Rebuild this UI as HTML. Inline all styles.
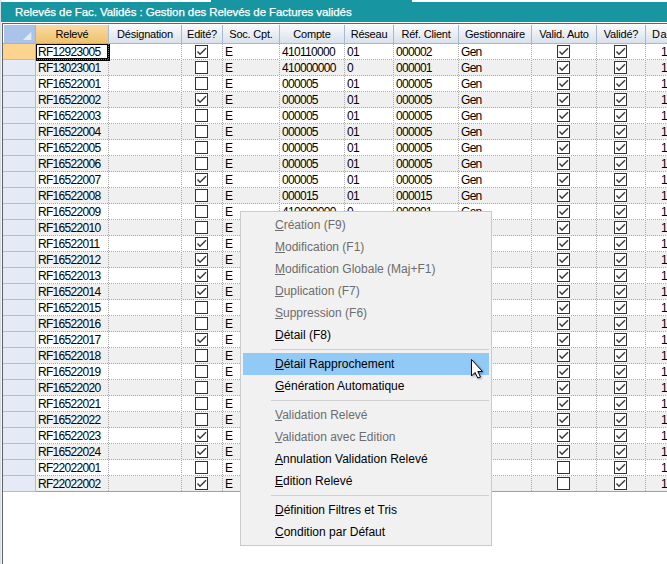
<!DOCTYPE html>
<html><head><meta charset="utf-8">
<style>
*{margin:0;padding:0;box-sizing:border-box}
html,body{width:667px;height:564px;overflow:hidden;background:#fff}
body{position:relative;font-family:"Liberation Sans",sans-serif}
.a{position:absolute}
.t{position:absolute;font-size:12px;letter-spacing:-0.7px;color:#000;white-space:nowrap;line-height:16px}
.h{position:absolute;font-size:11px;letter-spacing:-0.2px;color:#000;white-space:nowrap;line-height:18px;top:25px;text-align:center}
.cb{position:absolute;width:13px;height:13px;border:1px solid #333;background:#fff}
.cb svg{position:absolute;left:-1px;top:-1px}
.mi{position:absolute;left:275px;font-size:12px;white-space:nowrap;line-height:22px;color:#000}
.mi.d{color:#6d6d6d}
.mi u{text-decoration:underline;text-decoration-thickness:1px;text-underline-offset:1px}
</style></head><body>

<div class="a" style="left:0;top:0;width:1px;height:564px;background:#d6dfe8"></div><div class="a" style="left:1px;top:0;width:1px;height:564px;background:#eef2f6"></div>
<div class="a" style="left:211px;top:0;width:201px;height:2px;background:#1795a1"></div>
<div class="a" style="left:1px;top:2px;width:666px;height:20px;background:#1795a1"></div>
<div class="a" style="left:15px;top:2px;height:20px;line-height:20px;font-size:11.5px;letter-spacing:-0.08px;color:#fff;white-space:nowrap;-webkit-text-stroke:0.25px #fff">Relevés de Fac. Validés : Gestion des Relevés de Factures validés</div>
<div class="a" style="left:2px;top:23px;width:665px;height:541px;border-left:1px solid #646464;border-top:1px solid #646464"></div>
<div class="a" style="left:3px;top:24px;width:664px;height:540px;border-left:1px solid #fff;border-top:1px solid #fff"></div>
<div class="a" style="left:4px;top:25px;width:663px;height:18px;background:linear-gradient(#f9fafc,#dae1eb)"></div>
<div class="a" style="left:4px;top:43px;width:663px;height:1px;background:#a5b9d3"></div>
<div class="a" style="left:4px;top:25px;width:31px;height:18px;background:#a9c4e8"></div>
<svg class="a" style="left:0;top:0" width="40" height="44"><polygon points="23,40 31.3,31.7 31.3,40" fill="#e4ebf6"/></svg>
<div class="a" style="left:36px;top:25px;width:72px;height:18px;background:linear-gradient(#f9dba6,#efc16b)"></div>
<div class="a" style="left:35px;top:25px;width:1px;height:19px;background:#f7a43e"></div>
<div class="a" style="left:3px;top:43px;width:105px;height:1px;background:#f7a43e"></div>
<div class="a" style="left:108px;top:25px;width:1px;height:18px;background:#a5b9d3"></div>
<div class="a" style="left:181px;top:25px;width:1px;height:18px;background:#a5b9d3"></div>
<div class="a" style="left:222px;top:25px;width:1px;height:18px;background:#a5b9d3"></div>
<div class="a" style="left:279px;top:25px;width:1px;height:18px;background:#a5b9d3"></div>
<div class="a" style="left:344px;top:25px;width:1px;height:18px;background:#a5b9d3"></div>
<div class="a" style="left:393px;top:25px;width:1px;height:18px;background:#a5b9d3"></div>
<div class="a" style="left:458px;top:25px;width:1px;height:18px;background:#a5b9d3"></div>
<div class="a" style="left:531px;top:25px;width:1px;height:18px;background:#a5b9d3"></div>
<div class="a" style="left:596px;top:25px;width:1px;height:18px;background:#a5b9d3"></div>
<div class="a" style="left:645px;top:25px;width:1px;height:18px;background:#a5b9d3"></div>
<div class="h" style="left:36px;width:72px">Relevé</div>
<div class="h" style="left:109px;width:72px">Désignation</div>
<div class="h" style="left:182px;width:40px">Edité?</div>
<div class="h" style="left:223px;width:56px">Soc. Cpt.</div>
<div class="h" style="left:280px;width:64px">Compte</div>
<div class="h" style="left:345px;width:48px">Réseau</div>
<div class="h" style="left:394px;width:64px">Réf. Client</div>
<div class="h" style="left:459px;width:72px">Gestionnaire</div>
<div class="h" style="left:532px;width:64px">Valid. Auto</div>
<div class="h" style="left:597px;width:48px">Validé?</div>
<div class="h" style="left:652px;width:40px;text-align:left;letter-spacing:0.6px">Da</div>
<div class="a" style="left:36px;top:44px;width:631px;height:15px;background:#fff"></div>
<div class="a" style="left:3px;top:44px;width:32px;height:15px;background:#fdd48f"></div>
<div class="a" style="left:3px;top:59px;width:33px;height:1px;background:#a8bedb"></div>
<div class="a" style="left:35px;top:44px;width:1px;height:16px;background:#f7a43e"></div>
<div class="a" style="left:36px;top:59px;width:631px;height:1px;background:repeating-linear-gradient(90deg,#fff 0 1px,#a8a8a8 1px 2px)"></div>
<div class="t" style="left:38px;top:44px">RF12923005</div>
<div class="t" style="left:225px;top:44px">E</div>
<div class="t" style="left:282px;top:44px">410110000</div>
<div class="t" style="left:347px;top:44px">01</div>
<div class="t" style="left:396px;top:44px">000002</div>
<div class="t" style="left:461px;top:44px">Gen</div>
<div class="t" style="left:661px;top:44px">1</div>
<div class="cb" style="left:195px;top:45px"><svg width="13" height="13"><polyline points="2.5,6.5 5,9.2 11,3.2" fill="none" stroke="#3a3a3a" stroke-width="1.5"/></svg></div>
<div class="cb" style="left:557px;top:45px"><svg width="13" height="13"><polyline points="2.5,6.5 5,9.2 11,3.2" fill="none" stroke="#3a3a3a" stroke-width="1.5"/></svg></div>
<div class="cb" style="left:614px;top:45px"><svg width="13" height="13"><polyline points="2.5,6.5 5,9.2 11,3.2" fill="none" stroke="#3a3a3a" stroke-width="1.5"/></svg></div>
<div class="a" style="left:36px;top:60px;width:631px;height:15px;background:#f0f0f0"></div>
<div class="a" style="left:3px;top:60px;width:32px;height:15px;background:#e4ebf7"></div>
<div class="a" style="left:3px;top:75px;width:33px;height:1px;background:#a8bedb"></div>
<div class="a" style="left:35px;top:60px;width:1px;height:16px;background:#a8bedb"></div>
<div class="a" style="left:36px;top:75px;width:631px;height:1px;background:repeating-linear-gradient(90deg,#f0f0f0 0 1px,#a8a8a8 1px 2px)"></div>
<div class="t" style="left:38px;top:60px">RF13023001</div>
<div class="t" style="left:225px;top:60px">E</div>
<div class="t" style="left:282px;top:60px">410000000</div>
<div class="t" style="left:347px;top:60px">0</div>
<div class="t" style="left:396px;top:60px">000001</div>
<div class="t" style="left:461px;top:60px">Gen</div>
<div class="t" style="left:661px;top:60px">1</div>
<div class="cb" style="left:195px;top:61px"></div>
<div class="cb" style="left:557px;top:61px"><svg width="13" height="13"><polyline points="2.5,6.5 5,9.2 11,3.2" fill="none" stroke="#3a3a3a" stroke-width="1.5"/></svg></div>
<div class="cb" style="left:614px;top:61px"><svg width="13" height="13"><polyline points="2.5,6.5 5,9.2 11,3.2" fill="none" stroke="#3a3a3a" stroke-width="1.5"/></svg></div>
<div class="a" style="left:36px;top:76px;width:631px;height:15px;background:#fff"></div>
<div class="a" style="left:3px;top:76px;width:32px;height:15px;background:#e4ebf7"></div>
<div class="a" style="left:3px;top:91px;width:33px;height:1px;background:#a8bedb"></div>
<div class="a" style="left:35px;top:76px;width:1px;height:16px;background:#a8bedb"></div>
<div class="a" style="left:36px;top:91px;width:631px;height:1px;background:repeating-linear-gradient(90deg,#fff 0 1px,#a8a8a8 1px 2px)"></div>
<div class="t" style="left:38px;top:76px">RF16522001</div>
<div class="t" style="left:225px;top:76px">E</div>
<div class="t" style="left:282px;top:76px">000005</div>
<div class="t" style="left:347px;top:76px">01</div>
<div class="t" style="left:396px;top:76px">000005</div>
<div class="t" style="left:461px;top:76px">Gen</div>
<div class="t" style="left:661px;top:76px">1</div>
<div class="cb" style="left:195px;top:77px"></div>
<div class="cb" style="left:557px;top:77px"><svg width="13" height="13"><polyline points="2.5,6.5 5,9.2 11,3.2" fill="none" stroke="#3a3a3a" stroke-width="1.5"/></svg></div>
<div class="cb" style="left:614px;top:77px"><svg width="13" height="13"><polyline points="2.5,6.5 5,9.2 11,3.2" fill="none" stroke="#3a3a3a" stroke-width="1.5"/></svg></div>
<div class="a" style="left:36px;top:92px;width:631px;height:15px;background:#f0f0f0"></div>
<div class="a" style="left:3px;top:92px;width:32px;height:15px;background:#e4ebf7"></div>
<div class="a" style="left:3px;top:107px;width:33px;height:1px;background:#a8bedb"></div>
<div class="a" style="left:35px;top:92px;width:1px;height:16px;background:#a8bedb"></div>
<div class="a" style="left:36px;top:107px;width:631px;height:1px;background:repeating-linear-gradient(90deg,#f0f0f0 0 1px,#a8a8a8 1px 2px)"></div>
<div class="t" style="left:38px;top:92px">RF16522002</div>
<div class="t" style="left:225px;top:92px">E</div>
<div class="t" style="left:282px;top:92px">000005</div>
<div class="t" style="left:347px;top:92px">01</div>
<div class="t" style="left:396px;top:92px">000005</div>
<div class="t" style="left:461px;top:92px">Gen</div>
<div class="t" style="left:661px;top:92px">1</div>
<div class="cb" style="left:195px;top:93px"><svg width="13" height="13"><polyline points="2.5,6.5 5,9.2 11,3.2" fill="none" stroke="#3a3a3a" stroke-width="1.5"/></svg></div>
<div class="cb" style="left:557px;top:93px"><svg width="13" height="13"><polyline points="2.5,6.5 5,9.2 11,3.2" fill="none" stroke="#3a3a3a" stroke-width="1.5"/></svg></div>
<div class="cb" style="left:614px;top:93px"><svg width="13" height="13"><polyline points="2.5,6.5 5,9.2 11,3.2" fill="none" stroke="#3a3a3a" stroke-width="1.5"/></svg></div>
<div class="a" style="left:36px;top:108px;width:631px;height:15px;background:#fff"></div>
<div class="a" style="left:3px;top:108px;width:32px;height:15px;background:#e4ebf7"></div>
<div class="a" style="left:3px;top:123px;width:33px;height:1px;background:#a8bedb"></div>
<div class="a" style="left:35px;top:108px;width:1px;height:16px;background:#a8bedb"></div>
<div class="a" style="left:36px;top:123px;width:631px;height:1px;background:repeating-linear-gradient(90deg,#fff 0 1px,#a8a8a8 1px 2px)"></div>
<div class="t" style="left:38px;top:108px">RF16522003</div>
<div class="t" style="left:225px;top:108px">E</div>
<div class="t" style="left:282px;top:108px">000005</div>
<div class="t" style="left:347px;top:108px">01</div>
<div class="t" style="left:396px;top:108px">000005</div>
<div class="t" style="left:461px;top:108px">Gen</div>
<div class="t" style="left:661px;top:108px">1</div>
<div class="cb" style="left:195px;top:109px"></div>
<div class="cb" style="left:557px;top:109px"><svg width="13" height="13"><polyline points="2.5,6.5 5,9.2 11,3.2" fill="none" stroke="#3a3a3a" stroke-width="1.5"/></svg></div>
<div class="cb" style="left:614px;top:109px"><svg width="13" height="13"><polyline points="2.5,6.5 5,9.2 11,3.2" fill="none" stroke="#3a3a3a" stroke-width="1.5"/></svg></div>
<div class="a" style="left:36px;top:124px;width:631px;height:15px;background:#f0f0f0"></div>
<div class="a" style="left:3px;top:124px;width:32px;height:15px;background:#e4ebf7"></div>
<div class="a" style="left:3px;top:139px;width:33px;height:1px;background:#a8bedb"></div>
<div class="a" style="left:35px;top:124px;width:1px;height:16px;background:#a8bedb"></div>
<div class="a" style="left:36px;top:139px;width:631px;height:1px;background:repeating-linear-gradient(90deg,#f0f0f0 0 1px,#a8a8a8 1px 2px)"></div>
<div class="t" style="left:38px;top:124px">RF16522004</div>
<div class="t" style="left:225px;top:124px">E</div>
<div class="t" style="left:282px;top:124px">000005</div>
<div class="t" style="left:347px;top:124px">01</div>
<div class="t" style="left:396px;top:124px">000005</div>
<div class="t" style="left:461px;top:124px">Gen</div>
<div class="t" style="left:661px;top:124px">1</div>
<div class="cb" style="left:195px;top:125px"></div>
<div class="cb" style="left:557px;top:125px"><svg width="13" height="13"><polyline points="2.5,6.5 5,9.2 11,3.2" fill="none" stroke="#3a3a3a" stroke-width="1.5"/></svg></div>
<div class="cb" style="left:614px;top:125px"><svg width="13" height="13"><polyline points="2.5,6.5 5,9.2 11,3.2" fill="none" stroke="#3a3a3a" stroke-width="1.5"/></svg></div>
<div class="a" style="left:36px;top:140px;width:631px;height:15px;background:#fff"></div>
<div class="a" style="left:3px;top:140px;width:32px;height:15px;background:#e4ebf7"></div>
<div class="a" style="left:3px;top:155px;width:33px;height:1px;background:#a8bedb"></div>
<div class="a" style="left:35px;top:140px;width:1px;height:16px;background:#a8bedb"></div>
<div class="a" style="left:36px;top:155px;width:631px;height:1px;background:repeating-linear-gradient(90deg,#fff 0 1px,#a8a8a8 1px 2px)"></div>
<div class="t" style="left:38px;top:140px">RF16522005</div>
<div class="t" style="left:225px;top:140px">E</div>
<div class="t" style="left:282px;top:140px">000005</div>
<div class="t" style="left:347px;top:140px">01</div>
<div class="t" style="left:396px;top:140px">000005</div>
<div class="t" style="left:461px;top:140px">Gen</div>
<div class="t" style="left:661px;top:140px">1</div>
<div class="cb" style="left:195px;top:141px"></div>
<div class="cb" style="left:557px;top:141px"><svg width="13" height="13"><polyline points="2.5,6.5 5,9.2 11,3.2" fill="none" stroke="#3a3a3a" stroke-width="1.5"/></svg></div>
<div class="cb" style="left:614px;top:141px"><svg width="13" height="13"><polyline points="2.5,6.5 5,9.2 11,3.2" fill="none" stroke="#3a3a3a" stroke-width="1.5"/></svg></div>
<div class="a" style="left:36px;top:156px;width:631px;height:15px;background:#f0f0f0"></div>
<div class="a" style="left:3px;top:156px;width:32px;height:15px;background:#e4ebf7"></div>
<div class="a" style="left:3px;top:171px;width:33px;height:1px;background:#a8bedb"></div>
<div class="a" style="left:35px;top:156px;width:1px;height:16px;background:#a8bedb"></div>
<div class="a" style="left:36px;top:171px;width:631px;height:1px;background:repeating-linear-gradient(90deg,#f0f0f0 0 1px,#a8a8a8 1px 2px)"></div>
<div class="t" style="left:38px;top:156px">RF16522006</div>
<div class="t" style="left:225px;top:156px">E</div>
<div class="t" style="left:282px;top:156px">000005</div>
<div class="t" style="left:347px;top:156px">01</div>
<div class="t" style="left:396px;top:156px">000005</div>
<div class="t" style="left:461px;top:156px">Gen</div>
<div class="t" style="left:661px;top:156px">1</div>
<div class="cb" style="left:195px;top:157px"></div>
<div class="cb" style="left:557px;top:157px"><svg width="13" height="13"><polyline points="2.5,6.5 5,9.2 11,3.2" fill="none" stroke="#3a3a3a" stroke-width="1.5"/></svg></div>
<div class="cb" style="left:614px;top:157px"><svg width="13" height="13"><polyline points="2.5,6.5 5,9.2 11,3.2" fill="none" stroke="#3a3a3a" stroke-width="1.5"/></svg></div>
<div class="a" style="left:36px;top:172px;width:631px;height:15px;background:#fff"></div>
<div class="a" style="left:3px;top:172px;width:32px;height:15px;background:#e4ebf7"></div>
<div class="a" style="left:3px;top:187px;width:33px;height:1px;background:#a8bedb"></div>
<div class="a" style="left:35px;top:172px;width:1px;height:16px;background:#a8bedb"></div>
<div class="a" style="left:36px;top:187px;width:631px;height:1px;background:repeating-linear-gradient(90deg,#fff 0 1px,#a8a8a8 1px 2px)"></div>
<div class="t" style="left:38px;top:172px">RF16522007</div>
<div class="t" style="left:225px;top:172px">E</div>
<div class="t" style="left:282px;top:172px">000005</div>
<div class="t" style="left:347px;top:172px">01</div>
<div class="t" style="left:396px;top:172px">000005</div>
<div class="t" style="left:461px;top:172px">Gen</div>
<div class="t" style="left:661px;top:172px">1</div>
<div class="cb" style="left:195px;top:173px"><svg width="13" height="13"><polyline points="2.5,6.5 5,9.2 11,3.2" fill="none" stroke="#3a3a3a" stroke-width="1.5"/></svg></div>
<div class="cb" style="left:557px;top:173px"><svg width="13" height="13"><polyline points="2.5,6.5 5,9.2 11,3.2" fill="none" stroke="#3a3a3a" stroke-width="1.5"/></svg></div>
<div class="cb" style="left:614px;top:173px"><svg width="13" height="13"><polyline points="2.5,6.5 5,9.2 11,3.2" fill="none" stroke="#3a3a3a" stroke-width="1.5"/></svg></div>
<div class="a" style="left:36px;top:188px;width:631px;height:15px;background:#f0f0f0"></div>
<div class="a" style="left:3px;top:188px;width:32px;height:15px;background:#e4ebf7"></div>
<div class="a" style="left:3px;top:203px;width:33px;height:1px;background:#a8bedb"></div>
<div class="a" style="left:35px;top:188px;width:1px;height:16px;background:#a8bedb"></div>
<div class="a" style="left:36px;top:203px;width:631px;height:1px;background:repeating-linear-gradient(90deg,#f0f0f0 0 1px,#a8a8a8 1px 2px)"></div>
<div class="t" style="left:38px;top:188px">RF16522008</div>
<div class="t" style="left:225px;top:188px">E</div>
<div class="t" style="left:282px;top:188px">000015</div>
<div class="t" style="left:347px;top:188px">01</div>
<div class="t" style="left:396px;top:188px">000015</div>
<div class="t" style="left:461px;top:188px">Gen</div>
<div class="t" style="left:661px;top:188px">1</div>
<div class="cb" style="left:195px;top:189px"></div>
<div class="cb" style="left:557px;top:189px"><svg width="13" height="13"><polyline points="2.5,6.5 5,9.2 11,3.2" fill="none" stroke="#3a3a3a" stroke-width="1.5"/></svg></div>
<div class="cb" style="left:614px;top:189px"><svg width="13" height="13"><polyline points="2.5,6.5 5,9.2 11,3.2" fill="none" stroke="#3a3a3a" stroke-width="1.5"/></svg></div>
<div class="a" style="left:36px;top:204px;width:631px;height:15px;background:#fff"></div>
<div class="a" style="left:3px;top:204px;width:32px;height:15px;background:#e4ebf7"></div>
<div class="a" style="left:3px;top:219px;width:33px;height:1px;background:#a8bedb"></div>
<div class="a" style="left:35px;top:204px;width:1px;height:16px;background:#a8bedb"></div>
<div class="a" style="left:36px;top:219px;width:631px;height:1px;background:repeating-linear-gradient(90deg,#fff 0 1px,#a8a8a8 1px 2px)"></div>
<div class="t" style="left:38px;top:204px">RF16522009</div>
<div class="t" style="left:225px;top:204px">E</div>
<div class="t" style="left:282px;top:204px">410000000</div>
<div class="t" style="left:347px;top:204px">0</div>
<div class="t" style="left:396px;top:204px">000001</div>
<div class="t" style="left:461px;top:204px">Gen</div>
<div class="t" style="left:661px;top:204px">1</div>
<div class="cb" style="left:195px;top:205px"></div>
<div class="cb" style="left:557px;top:205px"><svg width="13" height="13"><polyline points="2.5,6.5 5,9.2 11,3.2" fill="none" stroke="#3a3a3a" stroke-width="1.5"/></svg></div>
<div class="cb" style="left:614px;top:205px"><svg width="13" height="13"><polyline points="2.5,6.5 5,9.2 11,3.2" fill="none" stroke="#3a3a3a" stroke-width="1.5"/></svg></div>
<div class="a" style="left:36px;top:220px;width:631px;height:15px;background:#f0f0f0"></div>
<div class="a" style="left:3px;top:220px;width:32px;height:15px;background:#e4ebf7"></div>
<div class="a" style="left:3px;top:235px;width:33px;height:1px;background:#a8bedb"></div>
<div class="a" style="left:35px;top:220px;width:1px;height:16px;background:#a8bedb"></div>
<div class="a" style="left:36px;top:235px;width:631px;height:1px;background:repeating-linear-gradient(90deg,#f0f0f0 0 1px,#a8a8a8 1px 2px)"></div>
<div class="t" style="left:38px;top:220px">RF16522010</div>
<div class="t" style="left:225px;top:220px">E</div>
<div class="t" style="left:282px;top:220px">000005</div>
<div class="t" style="left:347px;top:220px">01</div>
<div class="t" style="left:396px;top:220px">000005</div>
<div class="t" style="left:461px;top:220px">Gen</div>
<div class="t" style="left:661px;top:220px">1</div>
<div class="cb" style="left:195px;top:221px"></div>
<div class="cb" style="left:557px;top:221px"><svg width="13" height="13"><polyline points="2.5,6.5 5,9.2 11,3.2" fill="none" stroke="#3a3a3a" stroke-width="1.5"/></svg></div>
<div class="cb" style="left:614px;top:221px"><svg width="13" height="13"><polyline points="2.5,6.5 5,9.2 11,3.2" fill="none" stroke="#3a3a3a" stroke-width="1.5"/></svg></div>
<div class="a" style="left:36px;top:236px;width:631px;height:15px;background:#fff"></div>
<div class="a" style="left:3px;top:236px;width:32px;height:15px;background:#e4ebf7"></div>
<div class="a" style="left:3px;top:251px;width:33px;height:1px;background:#a8bedb"></div>
<div class="a" style="left:35px;top:236px;width:1px;height:16px;background:#a8bedb"></div>
<div class="a" style="left:36px;top:251px;width:631px;height:1px;background:repeating-linear-gradient(90deg,#fff 0 1px,#a8a8a8 1px 2px)"></div>
<div class="t" style="left:38px;top:236px">RF16522011</div>
<div class="t" style="left:225px;top:236px">E</div>
<div class="t" style="left:282px;top:236px">000005</div>
<div class="t" style="left:347px;top:236px">01</div>
<div class="t" style="left:396px;top:236px">000005</div>
<div class="t" style="left:461px;top:236px">Gen</div>
<div class="t" style="left:661px;top:236px">1</div>
<div class="cb" style="left:195px;top:237px"><svg width="13" height="13"><polyline points="2.5,6.5 5,9.2 11,3.2" fill="none" stroke="#3a3a3a" stroke-width="1.5"/></svg></div>
<div class="cb" style="left:557px;top:237px"><svg width="13" height="13"><polyline points="2.5,6.5 5,9.2 11,3.2" fill="none" stroke="#3a3a3a" stroke-width="1.5"/></svg></div>
<div class="cb" style="left:614px;top:237px"><svg width="13" height="13"><polyline points="2.5,6.5 5,9.2 11,3.2" fill="none" stroke="#3a3a3a" stroke-width="1.5"/></svg></div>
<div class="a" style="left:36px;top:252px;width:631px;height:15px;background:#f0f0f0"></div>
<div class="a" style="left:3px;top:252px;width:32px;height:15px;background:#e4ebf7"></div>
<div class="a" style="left:3px;top:267px;width:33px;height:1px;background:#a8bedb"></div>
<div class="a" style="left:35px;top:252px;width:1px;height:16px;background:#a8bedb"></div>
<div class="a" style="left:36px;top:267px;width:631px;height:1px;background:repeating-linear-gradient(90deg,#f0f0f0 0 1px,#a8a8a8 1px 2px)"></div>
<div class="t" style="left:38px;top:252px">RF16522012</div>
<div class="t" style="left:225px;top:252px">E</div>
<div class="t" style="left:282px;top:252px">000005</div>
<div class="t" style="left:347px;top:252px">01</div>
<div class="t" style="left:396px;top:252px">000005</div>
<div class="t" style="left:461px;top:252px">Gen</div>
<div class="t" style="left:661px;top:252px">1</div>
<div class="cb" style="left:195px;top:253px"><svg width="13" height="13"><polyline points="2.5,6.5 5,9.2 11,3.2" fill="none" stroke="#3a3a3a" stroke-width="1.5"/></svg></div>
<div class="cb" style="left:557px;top:253px"><svg width="13" height="13"><polyline points="2.5,6.5 5,9.2 11,3.2" fill="none" stroke="#3a3a3a" stroke-width="1.5"/></svg></div>
<div class="cb" style="left:614px;top:253px"><svg width="13" height="13"><polyline points="2.5,6.5 5,9.2 11,3.2" fill="none" stroke="#3a3a3a" stroke-width="1.5"/></svg></div>
<div class="a" style="left:36px;top:268px;width:631px;height:15px;background:#fff"></div>
<div class="a" style="left:3px;top:268px;width:32px;height:15px;background:#e4ebf7"></div>
<div class="a" style="left:3px;top:283px;width:33px;height:1px;background:#a8bedb"></div>
<div class="a" style="left:35px;top:268px;width:1px;height:16px;background:#a8bedb"></div>
<div class="a" style="left:36px;top:283px;width:631px;height:1px;background:repeating-linear-gradient(90deg,#fff 0 1px,#a8a8a8 1px 2px)"></div>
<div class="t" style="left:38px;top:268px">RF16522013</div>
<div class="t" style="left:225px;top:268px">E</div>
<div class="t" style="left:282px;top:268px">000005</div>
<div class="t" style="left:347px;top:268px">01</div>
<div class="t" style="left:396px;top:268px">000005</div>
<div class="t" style="left:461px;top:268px">Gen</div>
<div class="t" style="left:661px;top:268px">1</div>
<div class="cb" style="left:195px;top:269px"><svg width="13" height="13"><polyline points="2.5,6.5 5,9.2 11,3.2" fill="none" stroke="#3a3a3a" stroke-width="1.5"/></svg></div>
<div class="cb" style="left:557px;top:269px"><svg width="13" height="13"><polyline points="2.5,6.5 5,9.2 11,3.2" fill="none" stroke="#3a3a3a" stroke-width="1.5"/></svg></div>
<div class="cb" style="left:614px;top:269px"><svg width="13" height="13"><polyline points="2.5,6.5 5,9.2 11,3.2" fill="none" stroke="#3a3a3a" stroke-width="1.5"/></svg></div>
<div class="a" style="left:36px;top:284px;width:631px;height:15px;background:#f0f0f0"></div>
<div class="a" style="left:3px;top:284px;width:32px;height:15px;background:#e4ebf7"></div>
<div class="a" style="left:3px;top:299px;width:33px;height:1px;background:#a8bedb"></div>
<div class="a" style="left:35px;top:284px;width:1px;height:16px;background:#a8bedb"></div>
<div class="a" style="left:36px;top:299px;width:631px;height:1px;background:repeating-linear-gradient(90deg,#f0f0f0 0 1px,#a8a8a8 1px 2px)"></div>
<div class="t" style="left:38px;top:284px">RF16522014</div>
<div class="t" style="left:225px;top:284px">E</div>
<div class="t" style="left:282px;top:284px">000005</div>
<div class="t" style="left:347px;top:284px">01</div>
<div class="t" style="left:396px;top:284px">000005</div>
<div class="t" style="left:461px;top:284px">Gen</div>
<div class="t" style="left:661px;top:284px">1</div>
<div class="cb" style="left:195px;top:285px"><svg width="13" height="13"><polyline points="2.5,6.5 5,9.2 11,3.2" fill="none" stroke="#3a3a3a" stroke-width="1.5"/></svg></div>
<div class="cb" style="left:557px;top:285px"><svg width="13" height="13"><polyline points="2.5,6.5 5,9.2 11,3.2" fill="none" stroke="#3a3a3a" stroke-width="1.5"/></svg></div>
<div class="cb" style="left:614px;top:285px"><svg width="13" height="13"><polyline points="2.5,6.5 5,9.2 11,3.2" fill="none" stroke="#3a3a3a" stroke-width="1.5"/></svg></div>
<div class="a" style="left:36px;top:300px;width:631px;height:15px;background:#fff"></div>
<div class="a" style="left:3px;top:300px;width:32px;height:15px;background:#e4ebf7"></div>
<div class="a" style="left:3px;top:315px;width:33px;height:1px;background:#a8bedb"></div>
<div class="a" style="left:35px;top:300px;width:1px;height:16px;background:#a8bedb"></div>
<div class="a" style="left:36px;top:315px;width:631px;height:1px;background:repeating-linear-gradient(90deg,#fff 0 1px,#a8a8a8 1px 2px)"></div>
<div class="t" style="left:38px;top:300px">RF16522015</div>
<div class="t" style="left:225px;top:300px">E</div>
<div class="t" style="left:282px;top:300px">000005</div>
<div class="t" style="left:347px;top:300px">01</div>
<div class="t" style="left:396px;top:300px">000005</div>
<div class="t" style="left:461px;top:300px">Gen</div>
<div class="t" style="left:661px;top:300px">1</div>
<div class="cb" style="left:195px;top:301px"></div>
<div class="cb" style="left:557px;top:301px"><svg width="13" height="13"><polyline points="2.5,6.5 5,9.2 11,3.2" fill="none" stroke="#3a3a3a" stroke-width="1.5"/></svg></div>
<div class="cb" style="left:614px;top:301px"><svg width="13" height="13"><polyline points="2.5,6.5 5,9.2 11,3.2" fill="none" stroke="#3a3a3a" stroke-width="1.5"/></svg></div>
<div class="a" style="left:36px;top:316px;width:631px;height:15px;background:#f0f0f0"></div>
<div class="a" style="left:3px;top:316px;width:32px;height:15px;background:#e4ebf7"></div>
<div class="a" style="left:3px;top:331px;width:33px;height:1px;background:#a8bedb"></div>
<div class="a" style="left:35px;top:316px;width:1px;height:16px;background:#a8bedb"></div>
<div class="a" style="left:36px;top:331px;width:631px;height:1px;background:repeating-linear-gradient(90deg,#f0f0f0 0 1px,#a8a8a8 1px 2px)"></div>
<div class="t" style="left:38px;top:316px">RF16522016</div>
<div class="t" style="left:225px;top:316px">E</div>
<div class="t" style="left:282px;top:316px">000005</div>
<div class="t" style="left:347px;top:316px">01</div>
<div class="t" style="left:396px;top:316px">000005</div>
<div class="t" style="left:461px;top:316px">Gen</div>
<div class="t" style="left:661px;top:316px">1</div>
<div class="cb" style="left:195px;top:317px"></div>
<div class="cb" style="left:557px;top:317px"><svg width="13" height="13"><polyline points="2.5,6.5 5,9.2 11,3.2" fill="none" stroke="#3a3a3a" stroke-width="1.5"/></svg></div>
<div class="cb" style="left:614px;top:317px"><svg width="13" height="13"><polyline points="2.5,6.5 5,9.2 11,3.2" fill="none" stroke="#3a3a3a" stroke-width="1.5"/></svg></div>
<div class="a" style="left:36px;top:332px;width:631px;height:15px;background:#fff"></div>
<div class="a" style="left:3px;top:332px;width:32px;height:15px;background:#e4ebf7"></div>
<div class="a" style="left:3px;top:347px;width:33px;height:1px;background:#a8bedb"></div>
<div class="a" style="left:35px;top:332px;width:1px;height:16px;background:#a8bedb"></div>
<div class="a" style="left:36px;top:347px;width:631px;height:1px;background:repeating-linear-gradient(90deg,#fff 0 1px,#a8a8a8 1px 2px)"></div>
<div class="t" style="left:38px;top:332px">RF16522017</div>
<div class="t" style="left:225px;top:332px">E</div>
<div class="t" style="left:282px;top:332px">000005</div>
<div class="t" style="left:347px;top:332px">01</div>
<div class="t" style="left:396px;top:332px">000005</div>
<div class="t" style="left:461px;top:332px">Gen</div>
<div class="t" style="left:661px;top:332px">1</div>
<div class="cb" style="left:195px;top:333px"><svg width="13" height="13"><polyline points="2.5,6.5 5,9.2 11,3.2" fill="none" stroke="#3a3a3a" stroke-width="1.5"/></svg></div>
<div class="cb" style="left:557px;top:333px"><svg width="13" height="13"><polyline points="2.5,6.5 5,9.2 11,3.2" fill="none" stroke="#3a3a3a" stroke-width="1.5"/></svg></div>
<div class="cb" style="left:614px;top:333px"><svg width="13" height="13"><polyline points="2.5,6.5 5,9.2 11,3.2" fill="none" stroke="#3a3a3a" stroke-width="1.5"/></svg></div>
<div class="a" style="left:36px;top:348px;width:631px;height:15px;background:#f0f0f0"></div>
<div class="a" style="left:3px;top:348px;width:32px;height:15px;background:#e4ebf7"></div>
<div class="a" style="left:3px;top:363px;width:33px;height:1px;background:#a8bedb"></div>
<div class="a" style="left:35px;top:348px;width:1px;height:16px;background:#a8bedb"></div>
<div class="a" style="left:36px;top:363px;width:631px;height:1px;background:repeating-linear-gradient(90deg,#f0f0f0 0 1px,#a8a8a8 1px 2px)"></div>
<div class="t" style="left:38px;top:348px">RF16522018</div>
<div class="t" style="left:225px;top:348px">E</div>
<div class="t" style="left:282px;top:348px">000005</div>
<div class="t" style="left:347px;top:348px">01</div>
<div class="t" style="left:396px;top:348px">000005</div>
<div class="t" style="left:461px;top:348px">Gen</div>
<div class="t" style="left:661px;top:348px">1</div>
<div class="cb" style="left:195px;top:349px"></div>
<div class="cb" style="left:557px;top:349px"><svg width="13" height="13"><polyline points="2.5,6.5 5,9.2 11,3.2" fill="none" stroke="#3a3a3a" stroke-width="1.5"/></svg></div>
<div class="cb" style="left:614px;top:349px"><svg width="13" height="13"><polyline points="2.5,6.5 5,9.2 11,3.2" fill="none" stroke="#3a3a3a" stroke-width="1.5"/></svg></div>
<div class="a" style="left:36px;top:364px;width:631px;height:15px;background:#fff"></div>
<div class="a" style="left:3px;top:364px;width:32px;height:15px;background:#e4ebf7"></div>
<div class="a" style="left:3px;top:379px;width:33px;height:1px;background:#a8bedb"></div>
<div class="a" style="left:35px;top:364px;width:1px;height:16px;background:#a8bedb"></div>
<div class="a" style="left:36px;top:379px;width:631px;height:1px;background:repeating-linear-gradient(90deg,#fff 0 1px,#a8a8a8 1px 2px)"></div>
<div class="t" style="left:38px;top:364px">RF16522019</div>
<div class="t" style="left:225px;top:364px">E</div>
<div class="t" style="left:282px;top:364px">000005</div>
<div class="t" style="left:347px;top:364px">01</div>
<div class="t" style="left:396px;top:364px">000005</div>
<div class="t" style="left:461px;top:364px">Gen</div>
<div class="t" style="left:661px;top:364px">1</div>
<div class="cb" style="left:195px;top:365px"></div>
<div class="cb" style="left:557px;top:365px"><svg width="13" height="13"><polyline points="2.5,6.5 5,9.2 11,3.2" fill="none" stroke="#3a3a3a" stroke-width="1.5"/></svg></div>
<div class="cb" style="left:614px;top:365px"><svg width="13" height="13"><polyline points="2.5,6.5 5,9.2 11,3.2" fill="none" stroke="#3a3a3a" stroke-width="1.5"/></svg></div>
<div class="a" style="left:36px;top:380px;width:631px;height:15px;background:#f0f0f0"></div>
<div class="a" style="left:3px;top:380px;width:32px;height:15px;background:#e4ebf7"></div>
<div class="a" style="left:3px;top:395px;width:33px;height:1px;background:#a8bedb"></div>
<div class="a" style="left:35px;top:380px;width:1px;height:16px;background:#a8bedb"></div>
<div class="a" style="left:36px;top:395px;width:631px;height:1px;background:repeating-linear-gradient(90deg,#f0f0f0 0 1px,#a8a8a8 1px 2px)"></div>
<div class="t" style="left:38px;top:380px">RF16522020</div>
<div class="t" style="left:225px;top:380px">E</div>
<div class="t" style="left:282px;top:380px">000005</div>
<div class="t" style="left:347px;top:380px">01</div>
<div class="t" style="left:396px;top:380px">000005</div>
<div class="t" style="left:461px;top:380px">Gen</div>
<div class="t" style="left:661px;top:380px">1</div>
<div class="cb" style="left:195px;top:381px"></div>
<div class="cb" style="left:557px;top:381px"><svg width="13" height="13"><polyline points="2.5,6.5 5,9.2 11,3.2" fill="none" stroke="#3a3a3a" stroke-width="1.5"/></svg></div>
<div class="cb" style="left:614px;top:381px"><svg width="13" height="13"><polyline points="2.5,6.5 5,9.2 11,3.2" fill="none" stroke="#3a3a3a" stroke-width="1.5"/></svg></div>
<div class="a" style="left:36px;top:396px;width:631px;height:15px;background:#fff"></div>
<div class="a" style="left:3px;top:396px;width:32px;height:15px;background:#e4ebf7"></div>
<div class="a" style="left:3px;top:411px;width:33px;height:1px;background:#a8bedb"></div>
<div class="a" style="left:35px;top:396px;width:1px;height:16px;background:#a8bedb"></div>
<div class="a" style="left:36px;top:411px;width:631px;height:1px;background:repeating-linear-gradient(90deg,#fff 0 1px,#a8a8a8 1px 2px)"></div>
<div class="t" style="left:38px;top:396px">RF16522021</div>
<div class="t" style="left:225px;top:396px">E</div>
<div class="t" style="left:282px;top:396px">000005</div>
<div class="t" style="left:347px;top:396px">01</div>
<div class="t" style="left:396px;top:396px">000005</div>
<div class="t" style="left:461px;top:396px">Gen</div>
<div class="t" style="left:661px;top:396px">1</div>
<div class="cb" style="left:195px;top:397px"></div>
<div class="cb" style="left:557px;top:397px"><svg width="13" height="13"><polyline points="2.5,6.5 5,9.2 11,3.2" fill="none" stroke="#3a3a3a" stroke-width="1.5"/></svg></div>
<div class="cb" style="left:614px;top:397px"><svg width="13" height="13"><polyline points="2.5,6.5 5,9.2 11,3.2" fill="none" stroke="#3a3a3a" stroke-width="1.5"/></svg></div>
<div class="a" style="left:36px;top:412px;width:631px;height:15px;background:#f0f0f0"></div>
<div class="a" style="left:3px;top:412px;width:32px;height:15px;background:#e4ebf7"></div>
<div class="a" style="left:3px;top:427px;width:33px;height:1px;background:#a8bedb"></div>
<div class="a" style="left:35px;top:412px;width:1px;height:16px;background:#a8bedb"></div>
<div class="a" style="left:36px;top:427px;width:631px;height:1px;background:repeating-linear-gradient(90deg,#f0f0f0 0 1px,#a8a8a8 1px 2px)"></div>
<div class="t" style="left:38px;top:412px">RF16522022</div>
<div class="t" style="left:225px;top:412px">E</div>
<div class="t" style="left:282px;top:412px">000005</div>
<div class="t" style="left:347px;top:412px">01</div>
<div class="t" style="left:396px;top:412px">000005</div>
<div class="t" style="left:461px;top:412px">Gen</div>
<div class="t" style="left:661px;top:412px">1</div>
<div class="cb" style="left:195px;top:413px"></div>
<div class="cb" style="left:557px;top:413px"><svg width="13" height="13"><polyline points="2.5,6.5 5,9.2 11,3.2" fill="none" stroke="#3a3a3a" stroke-width="1.5"/></svg></div>
<div class="cb" style="left:614px;top:413px"><svg width="13" height="13"><polyline points="2.5,6.5 5,9.2 11,3.2" fill="none" stroke="#3a3a3a" stroke-width="1.5"/></svg></div>
<div class="a" style="left:36px;top:428px;width:631px;height:15px;background:#fff"></div>
<div class="a" style="left:3px;top:428px;width:32px;height:15px;background:#e4ebf7"></div>
<div class="a" style="left:3px;top:443px;width:33px;height:1px;background:#a8bedb"></div>
<div class="a" style="left:35px;top:428px;width:1px;height:16px;background:#a8bedb"></div>
<div class="a" style="left:36px;top:443px;width:631px;height:1px;background:repeating-linear-gradient(90deg,#fff 0 1px,#a8a8a8 1px 2px)"></div>
<div class="t" style="left:38px;top:428px">RF16522023</div>
<div class="t" style="left:225px;top:428px">E</div>
<div class="t" style="left:282px;top:428px">000005</div>
<div class="t" style="left:347px;top:428px">01</div>
<div class="t" style="left:396px;top:428px">000005</div>
<div class="t" style="left:461px;top:428px">Gen</div>
<div class="t" style="left:661px;top:428px">1</div>
<div class="cb" style="left:195px;top:429px"><svg width="13" height="13"><polyline points="2.5,6.5 5,9.2 11,3.2" fill="none" stroke="#3a3a3a" stroke-width="1.5"/></svg></div>
<div class="cb" style="left:557px;top:429px"><svg width="13" height="13"><polyline points="2.5,6.5 5,9.2 11,3.2" fill="none" stroke="#3a3a3a" stroke-width="1.5"/></svg></div>
<div class="cb" style="left:614px;top:429px"><svg width="13" height="13"><polyline points="2.5,6.5 5,9.2 11,3.2" fill="none" stroke="#3a3a3a" stroke-width="1.5"/></svg></div>
<div class="a" style="left:36px;top:444px;width:631px;height:15px;background:#f0f0f0"></div>
<div class="a" style="left:3px;top:444px;width:32px;height:15px;background:#e4ebf7"></div>
<div class="a" style="left:3px;top:459px;width:33px;height:1px;background:#a8bedb"></div>
<div class="a" style="left:35px;top:444px;width:1px;height:16px;background:#a8bedb"></div>
<div class="a" style="left:36px;top:459px;width:631px;height:1px;background:repeating-linear-gradient(90deg,#f0f0f0 0 1px,#a8a8a8 1px 2px)"></div>
<div class="t" style="left:38px;top:444px">RF16522024</div>
<div class="t" style="left:225px;top:444px">E</div>
<div class="t" style="left:282px;top:444px">000005</div>
<div class="t" style="left:347px;top:444px">01</div>
<div class="t" style="left:396px;top:444px">000005</div>
<div class="t" style="left:461px;top:444px">Gen</div>
<div class="t" style="left:661px;top:444px">1</div>
<div class="cb" style="left:195px;top:445px"><svg width="13" height="13"><polyline points="2.5,6.5 5,9.2 11,3.2" fill="none" stroke="#3a3a3a" stroke-width="1.5"/></svg></div>
<div class="cb" style="left:557px;top:445px"><svg width="13" height="13"><polyline points="2.5,6.5 5,9.2 11,3.2" fill="none" stroke="#3a3a3a" stroke-width="1.5"/></svg></div>
<div class="cb" style="left:614px;top:445px"><svg width="13" height="13"><polyline points="2.5,6.5 5,9.2 11,3.2" fill="none" stroke="#3a3a3a" stroke-width="1.5"/></svg></div>
<div class="a" style="left:36px;top:460px;width:631px;height:15px;background:#fff"></div>
<div class="a" style="left:3px;top:460px;width:32px;height:15px;background:#e4ebf7"></div>
<div class="a" style="left:3px;top:475px;width:33px;height:1px;background:#a8bedb"></div>
<div class="a" style="left:35px;top:460px;width:1px;height:16px;background:#a8bedb"></div>
<div class="a" style="left:36px;top:475px;width:631px;height:1px;background:repeating-linear-gradient(90deg,#fff 0 1px,#a8a8a8 1px 2px)"></div>
<div class="t" style="left:38px;top:460px">RF22022001</div>
<div class="t" style="left:225px;top:460px">E</div>
<div class="t" style="left:282px;top:460px">000005</div>
<div class="t" style="left:347px;top:460px">01</div>
<div class="t" style="left:396px;top:460px">000005</div>
<div class="t" style="left:461px;top:460px">Gen</div>
<div class="t" style="left:661px;top:460px">1</div>
<div class="cb" style="left:195px;top:461px"></div>
<div class="cb" style="left:557px;top:461px"></div>
<div class="cb" style="left:614px;top:461px"><svg width="13" height="13"><polyline points="2.5,6.5 5,9.2 11,3.2" fill="none" stroke="#3a3a3a" stroke-width="1.5"/></svg></div>
<div class="a" style="left:36px;top:476px;width:631px;height:15px;background:#f0f0f0"></div>
<div class="a" style="left:3px;top:476px;width:32px;height:15px;background:#e4ebf7"></div>
<div class="a" style="left:3px;top:491px;width:33px;height:1px;background:#a8bedb"></div>
<div class="a" style="left:35px;top:476px;width:1px;height:16px;background:#a8bedb"></div>
<div class="a" style="left:36px;top:491px;width:631px;height:1px;background:repeating-linear-gradient(90deg,#f0f0f0 0 1px,#a8a8a8 1px 2px)"></div>
<div class="t" style="left:38px;top:476px">RF22022002</div>
<div class="t" style="left:225px;top:476px">E</div>
<div class="t" style="left:282px;top:476px">000005</div>
<div class="t" style="left:347px;top:476px">01</div>
<div class="t" style="left:396px;top:476px">000005</div>
<div class="t" style="left:461px;top:476px">Gen</div>
<div class="t" style="left:661px;top:476px">1</div>
<div class="cb" style="left:195px;top:477px"><svg width="13" height="13"><polyline points="2.5,6.5 5,9.2 11,3.2" fill="none" stroke="#3a3a3a" stroke-width="1.5"/></svg></div>
<div class="cb" style="left:557px;top:477px"></div>
<div class="cb" style="left:614px;top:477px"><svg width="13" height="13"><polyline points="2.5,6.5 5,9.2 11,3.2" fill="none" stroke="#3a3a3a" stroke-width="1.5"/></svg></div>
<div class="a" style="left:108px;top:44px;width:1px;height:16px;background:repeating-linear-gradient(180deg,#a8a8a8 0 1px,#fff 1px 2px)"></div>
<div class="a" style="left:181px;top:44px;width:1px;height:16px;background:repeating-linear-gradient(180deg,#a8a8a8 0 1px,#fff 1px 2px)"></div>
<div class="a" style="left:222px;top:44px;width:1px;height:16px;background:repeating-linear-gradient(180deg,#a8a8a8 0 1px,#fff 1px 2px)"></div>
<div class="a" style="left:279px;top:44px;width:1px;height:16px;background:repeating-linear-gradient(180deg,#a8a8a8 0 1px,#fff 1px 2px)"></div>
<div class="a" style="left:344px;top:44px;width:1px;height:16px;background:repeating-linear-gradient(180deg,#a8a8a8 0 1px,#fff 1px 2px)"></div>
<div class="a" style="left:393px;top:44px;width:1px;height:16px;background:repeating-linear-gradient(180deg,#a8a8a8 0 1px,#fff 1px 2px)"></div>
<div class="a" style="left:458px;top:44px;width:1px;height:16px;background:repeating-linear-gradient(180deg,#a8a8a8 0 1px,#fff 1px 2px)"></div>
<div class="a" style="left:531px;top:44px;width:1px;height:16px;background:repeating-linear-gradient(180deg,#a8a8a8 0 1px,#fff 1px 2px)"></div>
<div class="a" style="left:596px;top:44px;width:1px;height:16px;background:repeating-linear-gradient(180deg,#a8a8a8 0 1px,#fff 1px 2px)"></div>
<div class="a" style="left:645px;top:44px;width:1px;height:16px;background:repeating-linear-gradient(180deg,#a8a8a8 0 1px,#fff 1px 2px)"></div>
<div class="a" style="left:108px;top:60px;width:1px;height:16px;background:repeating-linear-gradient(180deg,#a8a8a8 0 1px,#f0f0f0 1px 2px)"></div>
<div class="a" style="left:181px;top:60px;width:1px;height:16px;background:repeating-linear-gradient(180deg,#a8a8a8 0 1px,#f0f0f0 1px 2px)"></div>
<div class="a" style="left:222px;top:60px;width:1px;height:16px;background:repeating-linear-gradient(180deg,#a8a8a8 0 1px,#f0f0f0 1px 2px)"></div>
<div class="a" style="left:279px;top:60px;width:1px;height:16px;background:repeating-linear-gradient(180deg,#a8a8a8 0 1px,#f0f0f0 1px 2px)"></div>
<div class="a" style="left:344px;top:60px;width:1px;height:16px;background:repeating-linear-gradient(180deg,#a8a8a8 0 1px,#f0f0f0 1px 2px)"></div>
<div class="a" style="left:393px;top:60px;width:1px;height:16px;background:repeating-linear-gradient(180deg,#a8a8a8 0 1px,#f0f0f0 1px 2px)"></div>
<div class="a" style="left:458px;top:60px;width:1px;height:16px;background:repeating-linear-gradient(180deg,#a8a8a8 0 1px,#f0f0f0 1px 2px)"></div>
<div class="a" style="left:531px;top:60px;width:1px;height:16px;background:repeating-linear-gradient(180deg,#a8a8a8 0 1px,#f0f0f0 1px 2px)"></div>
<div class="a" style="left:596px;top:60px;width:1px;height:16px;background:repeating-linear-gradient(180deg,#a8a8a8 0 1px,#f0f0f0 1px 2px)"></div>
<div class="a" style="left:645px;top:60px;width:1px;height:16px;background:repeating-linear-gradient(180deg,#a8a8a8 0 1px,#f0f0f0 1px 2px)"></div>
<div class="a" style="left:108px;top:76px;width:1px;height:16px;background:repeating-linear-gradient(180deg,#a8a8a8 0 1px,#fff 1px 2px)"></div>
<div class="a" style="left:181px;top:76px;width:1px;height:16px;background:repeating-linear-gradient(180deg,#a8a8a8 0 1px,#fff 1px 2px)"></div>
<div class="a" style="left:222px;top:76px;width:1px;height:16px;background:repeating-linear-gradient(180deg,#a8a8a8 0 1px,#fff 1px 2px)"></div>
<div class="a" style="left:279px;top:76px;width:1px;height:16px;background:repeating-linear-gradient(180deg,#a8a8a8 0 1px,#fff 1px 2px)"></div>
<div class="a" style="left:344px;top:76px;width:1px;height:16px;background:repeating-linear-gradient(180deg,#a8a8a8 0 1px,#fff 1px 2px)"></div>
<div class="a" style="left:393px;top:76px;width:1px;height:16px;background:repeating-linear-gradient(180deg,#a8a8a8 0 1px,#fff 1px 2px)"></div>
<div class="a" style="left:458px;top:76px;width:1px;height:16px;background:repeating-linear-gradient(180deg,#a8a8a8 0 1px,#fff 1px 2px)"></div>
<div class="a" style="left:531px;top:76px;width:1px;height:16px;background:repeating-linear-gradient(180deg,#a8a8a8 0 1px,#fff 1px 2px)"></div>
<div class="a" style="left:596px;top:76px;width:1px;height:16px;background:repeating-linear-gradient(180deg,#a8a8a8 0 1px,#fff 1px 2px)"></div>
<div class="a" style="left:645px;top:76px;width:1px;height:16px;background:repeating-linear-gradient(180deg,#a8a8a8 0 1px,#fff 1px 2px)"></div>
<div class="a" style="left:108px;top:92px;width:1px;height:16px;background:repeating-linear-gradient(180deg,#a8a8a8 0 1px,#f0f0f0 1px 2px)"></div>
<div class="a" style="left:181px;top:92px;width:1px;height:16px;background:repeating-linear-gradient(180deg,#a8a8a8 0 1px,#f0f0f0 1px 2px)"></div>
<div class="a" style="left:222px;top:92px;width:1px;height:16px;background:repeating-linear-gradient(180deg,#a8a8a8 0 1px,#f0f0f0 1px 2px)"></div>
<div class="a" style="left:279px;top:92px;width:1px;height:16px;background:repeating-linear-gradient(180deg,#a8a8a8 0 1px,#f0f0f0 1px 2px)"></div>
<div class="a" style="left:344px;top:92px;width:1px;height:16px;background:repeating-linear-gradient(180deg,#a8a8a8 0 1px,#f0f0f0 1px 2px)"></div>
<div class="a" style="left:393px;top:92px;width:1px;height:16px;background:repeating-linear-gradient(180deg,#a8a8a8 0 1px,#f0f0f0 1px 2px)"></div>
<div class="a" style="left:458px;top:92px;width:1px;height:16px;background:repeating-linear-gradient(180deg,#a8a8a8 0 1px,#f0f0f0 1px 2px)"></div>
<div class="a" style="left:531px;top:92px;width:1px;height:16px;background:repeating-linear-gradient(180deg,#a8a8a8 0 1px,#f0f0f0 1px 2px)"></div>
<div class="a" style="left:596px;top:92px;width:1px;height:16px;background:repeating-linear-gradient(180deg,#a8a8a8 0 1px,#f0f0f0 1px 2px)"></div>
<div class="a" style="left:645px;top:92px;width:1px;height:16px;background:repeating-linear-gradient(180deg,#a8a8a8 0 1px,#f0f0f0 1px 2px)"></div>
<div class="a" style="left:108px;top:108px;width:1px;height:16px;background:repeating-linear-gradient(180deg,#a8a8a8 0 1px,#fff 1px 2px)"></div>
<div class="a" style="left:181px;top:108px;width:1px;height:16px;background:repeating-linear-gradient(180deg,#a8a8a8 0 1px,#fff 1px 2px)"></div>
<div class="a" style="left:222px;top:108px;width:1px;height:16px;background:repeating-linear-gradient(180deg,#a8a8a8 0 1px,#fff 1px 2px)"></div>
<div class="a" style="left:279px;top:108px;width:1px;height:16px;background:repeating-linear-gradient(180deg,#a8a8a8 0 1px,#fff 1px 2px)"></div>
<div class="a" style="left:344px;top:108px;width:1px;height:16px;background:repeating-linear-gradient(180deg,#a8a8a8 0 1px,#fff 1px 2px)"></div>
<div class="a" style="left:393px;top:108px;width:1px;height:16px;background:repeating-linear-gradient(180deg,#a8a8a8 0 1px,#fff 1px 2px)"></div>
<div class="a" style="left:458px;top:108px;width:1px;height:16px;background:repeating-linear-gradient(180deg,#a8a8a8 0 1px,#fff 1px 2px)"></div>
<div class="a" style="left:531px;top:108px;width:1px;height:16px;background:repeating-linear-gradient(180deg,#a8a8a8 0 1px,#fff 1px 2px)"></div>
<div class="a" style="left:596px;top:108px;width:1px;height:16px;background:repeating-linear-gradient(180deg,#a8a8a8 0 1px,#fff 1px 2px)"></div>
<div class="a" style="left:645px;top:108px;width:1px;height:16px;background:repeating-linear-gradient(180deg,#a8a8a8 0 1px,#fff 1px 2px)"></div>
<div class="a" style="left:108px;top:124px;width:1px;height:16px;background:repeating-linear-gradient(180deg,#a8a8a8 0 1px,#f0f0f0 1px 2px)"></div>
<div class="a" style="left:181px;top:124px;width:1px;height:16px;background:repeating-linear-gradient(180deg,#a8a8a8 0 1px,#f0f0f0 1px 2px)"></div>
<div class="a" style="left:222px;top:124px;width:1px;height:16px;background:repeating-linear-gradient(180deg,#a8a8a8 0 1px,#f0f0f0 1px 2px)"></div>
<div class="a" style="left:279px;top:124px;width:1px;height:16px;background:repeating-linear-gradient(180deg,#a8a8a8 0 1px,#f0f0f0 1px 2px)"></div>
<div class="a" style="left:344px;top:124px;width:1px;height:16px;background:repeating-linear-gradient(180deg,#a8a8a8 0 1px,#f0f0f0 1px 2px)"></div>
<div class="a" style="left:393px;top:124px;width:1px;height:16px;background:repeating-linear-gradient(180deg,#a8a8a8 0 1px,#f0f0f0 1px 2px)"></div>
<div class="a" style="left:458px;top:124px;width:1px;height:16px;background:repeating-linear-gradient(180deg,#a8a8a8 0 1px,#f0f0f0 1px 2px)"></div>
<div class="a" style="left:531px;top:124px;width:1px;height:16px;background:repeating-linear-gradient(180deg,#a8a8a8 0 1px,#f0f0f0 1px 2px)"></div>
<div class="a" style="left:596px;top:124px;width:1px;height:16px;background:repeating-linear-gradient(180deg,#a8a8a8 0 1px,#f0f0f0 1px 2px)"></div>
<div class="a" style="left:645px;top:124px;width:1px;height:16px;background:repeating-linear-gradient(180deg,#a8a8a8 0 1px,#f0f0f0 1px 2px)"></div>
<div class="a" style="left:108px;top:140px;width:1px;height:16px;background:repeating-linear-gradient(180deg,#a8a8a8 0 1px,#fff 1px 2px)"></div>
<div class="a" style="left:181px;top:140px;width:1px;height:16px;background:repeating-linear-gradient(180deg,#a8a8a8 0 1px,#fff 1px 2px)"></div>
<div class="a" style="left:222px;top:140px;width:1px;height:16px;background:repeating-linear-gradient(180deg,#a8a8a8 0 1px,#fff 1px 2px)"></div>
<div class="a" style="left:279px;top:140px;width:1px;height:16px;background:repeating-linear-gradient(180deg,#a8a8a8 0 1px,#fff 1px 2px)"></div>
<div class="a" style="left:344px;top:140px;width:1px;height:16px;background:repeating-linear-gradient(180deg,#a8a8a8 0 1px,#fff 1px 2px)"></div>
<div class="a" style="left:393px;top:140px;width:1px;height:16px;background:repeating-linear-gradient(180deg,#a8a8a8 0 1px,#fff 1px 2px)"></div>
<div class="a" style="left:458px;top:140px;width:1px;height:16px;background:repeating-linear-gradient(180deg,#a8a8a8 0 1px,#fff 1px 2px)"></div>
<div class="a" style="left:531px;top:140px;width:1px;height:16px;background:repeating-linear-gradient(180deg,#a8a8a8 0 1px,#fff 1px 2px)"></div>
<div class="a" style="left:596px;top:140px;width:1px;height:16px;background:repeating-linear-gradient(180deg,#a8a8a8 0 1px,#fff 1px 2px)"></div>
<div class="a" style="left:645px;top:140px;width:1px;height:16px;background:repeating-linear-gradient(180deg,#a8a8a8 0 1px,#fff 1px 2px)"></div>
<div class="a" style="left:108px;top:156px;width:1px;height:16px;background:repeating-linear-gradient(180deg,#a8a8a8 0 1px,#f0f0f0 1px 2px)"></div>
<div class="a" style="left:181px;top:156px;width:1px;height:16px;background:repeating-linear-gradient(180deg,#a8a8a8 0 1px,#f0f0f0 1px 2px)"></div>
<div class="a" style="left:222px;top:156px;width:1px;height:16px;background:repeating-linear-gradient(180deg,#a8a8a8 0 1px,#f0f0f0 1px 2px)"></div>
<div class="a" style="left:279px;top:156px;width:1px;height:16px;background:repeating-linear-gradient(180deg,#a8a8a8 0 1px,#f0f0f0 1px 2px)"></div>
<div class="a" style="left:344px;top:156px;width:1px;height:16px;background:repeating-linear-gradient(180deg,#a8a8a8 0 1px,#f0f0f0 1px 2px)"></div>
<div class="a" style="left:393px;top:156px;width:1px;height:16px;background:repeating-linear-gradient(180deg,#a8a8a8 0 1px,#f0f0f0 1px 2px)"></div>
<div class="a" style="left:458px;top:156px;width:1px;height:16px;background:repeating-linear-gradient(180deg,#a8a8a8 0 1px,#f0f0f0 1px 2px)"></div>
<div class="a" style="left:531px;top:156px;width:1px;height:16px;background:repeating-linear-gradient(180deg,#a8a8a8 0 1px,#f0f0f0 1px 2px)"></div>
<div class="a" style="left:596px;top:156px;width:1px;height:16px;background:repeating-linear-gradient(180deg,#a8a8a8 0 1px,#f0f0f0 1px 2px)"></div>
<div class="a" style="left:645px;top:156px;width:1px;height:16px;background:repeating-linear-gradient(180deg,#a8a8a8 0 1px,#f0f0f0 1px 2px)"></div>
<div class="a" style="left:108px;top:172px;width:1px;height:16px;background:repeating-linear-gradient(180deg,#a8a8a8 0 1px,#fff 1px 2px)"></div>
<div class="a" style="left:181px;top:172px;width:1px;height:16px;background:repeating-linear-gradient(180deg,#a8a8a8 0 1px,#fff 1px 2px)"></div>
<div class="a" style="left:222px;top:172px;width:1px;height:16px;background:repeating-linear-gradient(180deg,#a8a8a8 0 1px,#fff 1px 2px)"></div>
<div class="a" style="left:279px;top:172px;width:1px;height:16px;background:repeating-linear-gradient(180deg,#a8a8a8 0 1px,#fff 1px 2px)"></div>
<div class="a" style="left:344px;top:172px;width:1px;height:16px;background:repeating-linear-gradient(180deg,#a8a8a8 0 1px,#fff 1px 2px)"></div>
<div class="a" style="left:393px;top:172px;width:1px;height:16px;background:repeating-linear-gradient(180deg,#a8a8a8 0 1px,#fff 1px 2px)"></div>
<div class="a" style="left:458px;top:172px;width:1px;height:16px;background:repeating-linear-gradient(180deg,#a8a8a8 0 1px,#fff 1px 2px)"></div>
<div class="a" style="left:531px;top:172px;width:1px;height:16px;background:repeating-linear-gradient(180deg,#a8a8a8 0 1px,#fff 1px 2px)"></div>
<div class="a" style="left:596px;top:172px;width:1px;height:16px;background:repeating-linear-gradient(180deg,#a8a8a8 0 1px,#fff 1px 2px)"></div>
<div class="a" style="left:645px;top:172px;width:1px;height:16px;background:repeating-linear-gradient(180deg,#a8a8a8 0 1px,#fff 1px 2px)"></div>
<div class="a" style="left:108px;top:188px;width:1px;height:16px;background:repeating-linear-gradient(180deg,#a8a8a8 0 1px,#f0f0f0 1px 2px)"></div>
<div class="a" style="left:181px;top:188px;width:1px;height:16px;background:repeating-linear-gradient(180deg,#a8a8a8 0 1px,#f0f0f0 1px 2px)"></div>
<div class="a" style="left:222px;top:188px;width:1px;height:16px;background:repeating-linear-gradient(180deg,#a8a8a8 0 1px,#f0f0f0 1px 2px)"></div>
<div class="a" style="left:279px;top:188px;width:1px;height:16px;background:repeating-linear-gradient(180deg,#a8a8a8 0 1px,#f0f0f0 1px 2px)"></div>
<div class="a" style="left:344px;top:188px;width:1px;height:16px;background:repeating-linear-gradient(180deg,#a8a8a8 0 1px,#f0f0f0 1px 2px)"></div>
<div class="a" style="left:393px;top:188px;width:1px;height:16px;background:repeating-linear-gradient(180deg,#a8a8a8 0 1px,#f0f0f0 1px 2px)"></div>
<div class="a" style="left:458px;top:188px;width:1px;height:16px;background:repeating-linear-gradient(180deg,#a8a8a8 0 1px,#f0f0f0 1px 2px)"></div>
<div class="a" style="left:531px;top:188px;width:1px;height:16px;background:repeating-linear-gradient(180deg,#a8a8a8 0 1px,#f0f0f0 1px 2px)"></div>
<div class="a" style="left:596px;top:188px;width:1px;height:16px;background:repeating-linear-gradient(180deg,#a8a8a8 0 1px,#f0f0f0 1px 2px)"></div>
<div class="a" style="left:645px;top:188px;width:1px;height:16px;background:repeating-linear-gradient(180deg,#a8a8a8 0 1px,#f0f0f0 1px 2px)"></div>
<div class="a" style="left:108px;top:204px;width:1px;height:16px;background:repeating-linear-gradient(180deg,#a8a8a8 0 1px,#fff 1px 2px)"></div>
<div class="a" style="left:181px;top:204px;width:1px;height:16px;background:repeating-linear-gradient(180deg,#a8a8a8 0 1px,#fff 1px 2px)"></div>
<div class="a" style="left:222px;top:204px;width:1px;height:16px;background:repeating-linear-gradient(180deg,#a8a8a8 0 1px,#fff 1px 2px)"></div>
<div class="a" style="left:279px;top:204px;width:1px;height:16px;background:repeating-linear-gradient(180deg,#a8a8a8 0 1px,#fff 1px 2px)"></div>
<div class="a" style="left:344px;top:204px;width:1px;height:16px;background:repeating-linear-gradient(180deg,#a8a8a8 0 1px,#fff 1px 2px)"></div>
<div class="a" style="left:393px;top:204px;width:1px;height:16px;background:repeating-linear-gradient(180deg,#a8a8a8 0 1px,#fff 1px 2px)"></div>
<div class="a" style="left:458px;top:204px;width:1px;height:16px;background:repeating-linear-gradient(180deg,#a8a8a8 0 1px,#fff 1px 2px)"></div>
<div class="a" style="left:531px;top:204px;width:1px;height:16px;background:repeating-linear-gradient(180deg,#a8a8a8 0 1px,#fff 1px 2px)"></div>
<div class="a" style="left:596px;top:204px;width:1px;height:16px;background:repeating-linear-gradient(180deg,#a8a8a8 0 1px,#fff 1px 2px)"></div>
<div class="a" style="left:645px;top:204px;width:1px;height:16px;background:repeating-linear-gradient(180deg,#a8a8a8 0 1px,#fff 1px 2px)"></div>
<div class="a" style="left:108px;top:220px;width:1px;height:16px;background:repeating-linear-gradient(180deg,#a8a8a8 0 1px,#f0f0f0 1px 2px)"></div>
<div class="a" style="left:181px;top:220px;width:1px;height:16px;background:repeating-linear-gradient(180deg,#a8a8a8 0 1px,#f0f0f0 1px 2px)"></div>
<div class="a" style="left:222px;top:220px;width:1px;height:16px;background:repeating-linear-gradient(180deg,#a8a8a8 0 1px,#f0f0f0 1px 2px)"></div>
<div class="a" style="left:279px;top:220px;width:1px;height:16px;background:repeating-linear-gradient(180deg,#a8a8a8 0 1px,#f0f0f0 1px 2px)"></div>
<div class="a" style="left:344px;top:220px;width:1px;height:16px;background:repeating-linear-gradient(180deg,#a8a8a8 0 1px,#f0f0f0 1px 2px)"></div>
<div class="a" style="left:393px;top:220px;width:1px;height:16px;background:repeating-linear-gradient(180deg,#a8a8a8 0 1px,#f0f0f0 1px 2px)"></div>
<div class="a" style="left:458px;top:220px;width:1px;height:16px;background:repeating-linear-gradient(180deg,#a8a8a8 0 1px,#f0f0f0 1px 2px)"></div>
<div class="a" style="left:531px;top:220px;width:1px;height:16px;background:repeating-linear-gradient(180deg,#a8a8a8 0 1px,#f0f0f0 1px 2px)"></div>
<div class="a" style="left:596px;top:220px;width:1px;height:16px;background:repeating-linear-gradient(180deg,#a8a8a8 0 1px,#f0f0f0 1px 2px)"></div>
<div class="a" style="left:645px;top:220px;width:1px;height:16px;background:repeating-linear-gradient(180deg,#a8a8a8 0 1px,#f0f0f0 1px 2px)"></div>
<div class="a" style="left:108px;top:236px;width:1px;height:16px;background:repeating-linear-gradient(180deg,#a8a8a8 0 1px,#fff 1px 2px)"></div>
<div class="a" style="left:181px;top:236px;width:1px;height:16px;background:repeating-linear-gradient(180deg,#a8a8a8 0 1px,#fff 1px 2px)"></div>
<div class="a" style="left:222px;top:236px;width:1px;height:16px;background:repeating-linear-gradient(180deg,#a8a8a8 0 1px,#fff 1px 2px)"></div>
<div class="a" style="left:279px;top:236px;width:1px;height:16px;background:repeating-linear-gradient(180deg,#a8a8a8 0 1px,#fff 1px 2px)"></div>
<div class="a" style="left:344px;top:236px;width:1px;height:16px;background:repeating-linear-gradient(180deg,#a8a8a8 0 1px,#fff 1px 2px)"></div>
<div class="a" style="left:393px;top:236px;width:1px;height:16px;background:repeating-linear-gradient(180deg,#a8a8a8 0 1px,#fff 1px 2px)"></div>
<div class="a" style="left:458px;top:236px;width:1px;height:16px;background:repeating-linear-gradient(180deg,#a8a8a8 0 1px,#fff 1px 2px)"></div>
<div class="a" style="left:531px;top:236px;width:1px;height:16px;background:repeating-linear-gradient(180deg,#a8a8a8 0 1px,#fff 1px 2px)"></div>
<div class="a" style="left:596px;top:236px;width:1px;height:16px;background:repeating-linear-gradient(180deg,#a8a8a8 0 1px,#fff 1px 2px)"></div>
<div class="a" style="left:645px;top:236px;width:1px;height:16px;background:repeating-linear-gradient(180deg,#a8a8a8 0 1px,#fff 1px 2px)"></div>
<div class="a" style="left:108px;top:252px;width:1px;height:16px;background:repeating-linear-gradient(180deg,#a8a8a8 0 1px,#f0f0f0 1px 2px)"></div>
<div class="a" style="left:181px;top:252px;width:1px;height:16px;background:repeating-linear-gradient(180deg,#a8a8a8 0 1px,#f0f0f0 1px 2px)"></div>
<div class="a" style="left:222px;top:252px;width:1px;height:16px;background:repeating-linear-gradient(180deg,#a8a8a8 0 1px,#f0f0f0 1px 2px)"></div>
<div class="a" style="left:279px;top:252px;width:1px;height:16px;background:repeating-linear-gradient(180deg,#a8a8a8 0 1px,#f0f0f0 1px 2px)"></div>
<div class="a" style="left:344px;top:252px;width:1px;height:16px;background:repeating-linear-gradient(180deg,#a8a8a8 0 1px,#f0f0f0 1px 2px)"></div>
<div class="a" style="left:393px;top:252px;width:1px;height:16px;background:repeating-linear-gradient(180deg,#a8a8a8 0 1px,#f0f0f0 1px 2px)"></div>
<div class="a" style="left:458px;top:252px;width:1px;height:16px;background:repeating-linear-gradient(180deg,#a8a8a8 0 1px,#f0f0f0 1px 2px)"></div>
<div class="a" style="left:531px;top:252px;width:1px;height:16px;background:repeating-linear-gradient(180deg,#a8a8a8 0 1px,#f0f0f0 1px 2px)"></div>
<div class="a" style="left:596px;top:252px;width:1px;height:16px;background:repeating-linear-gradient(180deg,#a8a8a8 0 1px,#f0f0f0 1px 2px)"></div>
<div class="a" style="left:645px;top:252px;width:1px;height:16px;background:repeating-linear-gradient(180deg,#a8a8a8 0 1px,#f0f0f0 1px 2px)"></div>
<div class="a" style="left:108px;top:268px;width:1px;height:16px;background:repeating-linear-gradient(180deg,#a8a8a8 0 1px,#fff 1px 2px)"></div>
<div class="a" style="left:181px;top:268px;width:1px;height:16px;background:repeating-linear-gradient(180deg,#a8a8a8 0 1px,#fff 1px 2px)"></div>
<div class="a" style="left:222px;top:268px;width:1px;height:16px;background:repeating-linear-gradient(180deg,#a8a8a8 0 1px,#fff 1px 2px)"></div>
<div class="a" style="left:279px;top:268px;width:1px;height:16px;background:repeating-linear-gradient(180deg,#a8a8a8 0 1px,#fff 1px 2px)"></div>
<div class="a" style="left:344px;top:268px;width:1px;height:16px;background:repeating-linear-gradient(180deg,#a8a8a8 0 1px,#fff 1px 2px)"></div>
<div class="a" style="left:393px;top:268px;width:1px;height:16px;background:repeating-linear-gradient(180deg,#a8a8a8 0 1px,#fff 1px 2px)"></div>
<div class="a" style="left:458px;top:268px;width:1px;height:16px;background:repeating-linear-gradient(180deg,#a8a8a8 0 1px,#fff 1px 2px)"></div>
<div class="a" style="left:531px;top:268px;width:1px;height:16px;background:repeating-linear-gradient(180deg,#a8a8a8 0 1px,#fff 1px 2px)"></div>
<div class="a" style="left:596px;top:268px;width:1px;height:16px;background:repeating-linear-gradient(180deg,#a8a8a8 0 1px,#fff 1px 2px)"></div>
<div class="a" style="left:645px;top:268px;width:1px;height:16px;background:repeating-linear-gradient(180deg,#a8a8a8 0 1px,#fff 1px 2px)"></div>
<div class="a" style="left:108px;top:284px;width:1px;height:16px;background:repeating-linear-gradient(180deg,#a8a8a8 0 1px,#f0f0f0 1px 2px)"></div>
<div class="a" style="left:181px;top:284px;width:1px;height:16px;background:repeating-linear-gradient(180deg,#a8a8a8 0 1px,#f0f0f0 1px 2px)"></div>
<div class="a" style="left:222px;top:284px;width:1px;height:16px;background:repeating-linear-gradient(180deg,#a8a8a8 0 1px,#f0f0f0 1px 2px)"></div>
<div class="a" style="left:279px;top:284px;width:1px;height:16px;background:repeating-linear-gradient(180deg,#a8a8a8 0 1px,#f0f0f0 1px 2px)"></div>
<div class="a" style="left:344px;top:284px;width:1px;height:16px;background:repeating-linear-gradient(180deg,#a8a8a8 0 1px,#f0f0f0 1px 2px)"></div>
<div class="a" style="left:393px;top:284px;width:1px;height:16px;background:repeating-linear-gradient(180deg,#a8a8a8 0 1px,#f0f0f0 1px 2px)"></div>
<div class="a" style="left:458px;top:284px;width:1px;height:16px;background:repeating-linear-gradient(180deg,#a8a8a8 0 1px,#f0f0f0 1px 2px)"></div>
<div class="a" style="left:531px;top:284px;width:1px;height:16px;background:repeating-linear-gradient(180deg,#a8a8a8 0 1px,#f0f0f0 1px 2px)"></div>
<div class="a" style="left:596px;top:284px;width:1px;height:16px;background:repeating-linear-gradient(180deg,#a8a8a8 0 1px,#f0f0f0 1px 2px)"></div>
<div class="a" style="left:645px;top:284px;width:1px;height:16px;background:repeating-linear-gradient(180deg,#a8a8a8 0 1px,#f0f0f0 1px 2px)"></div>
<div class="a" style="left:108px;top:300px;width:1px;height:16px;background:repeating-linear-gradient(180deg,#a8a8a8 0 1px,#fff 1px 2px)"></div>
<div class="a" style="left:181px;top:300px;width:1px;height:16px;background:repeating-linear-gradient(180deg,#a8a8a8 0 1px,#fff 1px 2px)"></div>
<div class="a" style="left:222px;top:300px;width:1px;height:16px;background:repeating-linear-gradient(180deg,#a8a8a8 0 1px,#fff 1px 2px)"></div>
<div class="a" style="left:279px;top:300px;width:1px;height:16px;background:repeating-linear-gradient(180deg,#a8a8a8 0 1px,#fff 1px 2px)"></div>
<div class="a" style="left:344px;top:300px;width:1px;height:16px;background:repeating-linear-gradient(180deg,#a8a8a8 0 1px,#fff 1px 2px)"></div>
<div class="a" style="left:393px;top:300px;width:1px;height:16px;background:repeating-linear-gradient(180deg,#a8a8a8 0 1px,#fff 1px 2px)"></div>
<div class="a" style="left:458px;top:300px;width:1px;height:16px;background:repeating-linear-gradient(180deg,#a8a8a8 0 1px,#fff 1px 2px)"></div>
<div class="a" style="left:531px;top:300px;width:1px;height:16px;background:repeating-linear-gradient(180deg,#a8a8a8 0 1px,#fff 1px 2px)"></div>
<div class="a" style="left:596px;top:300px;width:1px;height:16px;background:repeating-linear-gradient(180deg,#a8a8a8 0 1px,#fff 1px 2px)"></div>
<div class="a" style="left:645px;top:300px;width:1px;height:16px;background:repeating-linear-gradient(180deg,#a8a8a8 0 1px,#fff 1px 2px)"></div>
<div class="a" style="left:108px;top:316px;width:1px;height:16px;background:repeating-linear-gradient(180deg,#a8a8a8 0 1px,#f0f0f0 1px 2px)"></div>
<div class="a" style="left:181px;top:316px;width:1px;height:16px;background:repeating-linear-gradient(180deg,#a8a8a8 0 1px,#f0f0f0 1px 2px)"></div>
<div class="a" style="left:222px;top:316px;width:1px;height:16px;background:repeating-linear-gradient(180deg,#a8a8a8 0 1px,#f0f0f0 1px 2px)"></div>
<div class="a" style="left:279px;top:316px;width:1px;height:16px;background:repeating-linear-gradient(180deg,#a8a8a8 0 1px,#f0f0f0 1px 2px)"></div>
<div class="a" style="left:344px;top:316px;width:1px;height:16px;background:repeating-linear-gradient(180deg,#a8a8a8 0 1px,#f0f0f0 1px 2px)"></div>
<div class="a" style="left:393px;top:316px;width:1px;height:16px;background:repeating-linear-gradient(180deg,#a8a8a8 0 1px,#f0f0f0 1px 2px)"></div>
<div class="a" style="left:458px;top:316px;width:1px;height:16px;background:repeating-linear-gradient(180deg,#a8a8a8 0 1px,#f0f0f0 1px 2px)"></div>
<div class="a" style="left:531px;top:316px;width:1px;height:16px;background:repeating-linear-gradient(180deg,#a8a8a8 0 1px,#f0f0f0 1px 2px)"></div>
<div class="a" style="left:596px;top:316px;width:1px;height:16px;background:repeating-linear-gradient(180deg,#a8a8a8 0 1px,#f0f0f0 1px 2px)"></div>
<div class="a" style="left:645px;top:316px;width:1px;height:16px;background:repeating-linear-gradient(180deg,#a8a8a8 0 1px,#f0f0f0 1px 2px)"></div>
<div class="a" style="left:108px;top:332px;width:1px;height:16px;background:repeating-linear-gradient(180deg,#a8a8a8 0 1px,#fff 1px 2px)"></div>
<div class="a" style="left:181px;top:332px;width:1px;height:16px;background:repeating-linear-gradient(180deg,#a8a8a8 0 1px,#fff 1px 2px)"></div>
<div class="a" style="left:222px;top:332px;width:1px;height:16px;background:repeating-linear-gradient(180deg,#a8a8a8 0 1px,#fff 1px 2px)"></div>
<div class="a" style="left:279px;top:332px;width:1px;height:16px;background:repeating-linear-gradient(180deg,#a8a8a8 0 1px,#fff 1px 2px)"></div>
<div class="a" style="left:344px;top:332px;width:1px;height:16px;background:repeating-linear-gradient(180deg,#a8a8a8 0 1px,#fff 1px 2px)"></div>
<div class="a" style="left:393px;top:332px;width:1px;height:16px;background:repeating-linear-gradient(180deg,#a8a8a8 0 1px,#fff 1px 2px)"></div>
<div class="a" style="left:458px;top:332px;width:1px;height:16px;background:repeating-linear-gradient(180deg,#a8a8a8 0 1px,#fff 1px 2px)"></div>
<div class="a" style="left:531px;top:332px;width:1px;height:16px;background:repeating-linear-gradient(180deg,#a8a8a8 0 1px,#fff 1px 2px)"></div>
<div class="a" style="left:596px;top:332px;width:1px;height:16px;background:repeating-linear-gradient(180deg,#a8a8a8 0 1px,#fff 1px 2px)"></div>
<div class="a" style="left:645px;top:332px;width:1px;height:16px;background:repeating-linear-gradient(180deg,#a8a8a8 0 1px,#fff 1px 2px)"></div>
<div class="a" style="left:108px;top:348px;width:1px;height:16px;background:repeating-linear-gradient(180deg,#a8a8a8 0 1px,#f0f0f0 1px 2px)"></div>
<div class="a" style="left:181px;top:348px;width:1px;height:16px;background:repeating-linear-gradient(180deg,#a8a8a8 0 1px,#f0f0f0 1px 2px)"></div>
<div class="a" style="left:222px;top:348px;width:1px;height:16px;background:repeating-linear-gradient(180deg,#a8a8a8 0 1px,#f0f0f0 1px 2px)"></div>
<div class="a" style="left:279px;top:348px;width:1px;height:16px;background:repeating-linear-gradient(180deg,#a8a8a8 0 1px,#f0f0f0 1px 2px)"></div>
<div class="a" style="left:344px;top:348px;width:1px;height:16px;background:repeating-linear-gradient(180deg,#a8a8a8 0 1px,#f0f0f0 1px 2px)"></div>
<div class="a" style="left:393px;top:348px;width:1px;height:16px;background:repeating-linear-gradient(180deg,#a8a8a8 0 1px,#f0f0f0 1px 2px)"></div>
<div class="a" style="left:458px;top:348px;width:1px;height:16px;background:repeating-linear-gradient(180deg,#a8a8a8 0 1px,#f0f0f0 1px 2px)"></div>
<div class="a" style="left:531px;top:348px;width:1px;height:16px;background:repeating-linear-gradient(180deg,#a8a8a8 0 1px,#f0f0f0 1px 2px)"></div>
<div class="a" style="left:596px;top:348px;width:1px;height:16px;background:repeating-linear-gradient(180deg,#a8a8a8 0 1px,#f0f0f0 1px 2px)"></div>
<div class="a" style="left:645px;top:348px;width:1px;height:16px;background:repeating-linear-gradient(180deg,#a8a8a8 0 1px,#f0f0f0 1px 2px)"></div>
<div class="a" style="left:108px;top:364px;width:1px;height:16px;background:repeating-linear-gradient(180deg,#a8a8a8 0 1px,#fff 1px 2px)"></div>
<div class="a" style="left:181px;top:364px;width:1px;height:16px;background:repeating-linear-gradient(180deg,#a8a8a8 0 1px,#fff 1px 2px)"></div>
<div class="a" style="left:222px;top:364px;width:1px;height:16px;background:repeating-linear-gradient(180deg,#a8a8a8 0 1px,#fff 1px 2px)"></div>
<div class="a" style="left:279px;top:364px;width:1px;height:16px;background:repeating-linear-gradient(180deg,#a8a8a8 0 1px,#fff 1px 2px)"></div>
<div class="a" style="left:344px;top:364px;width:1px;height:16px;background:repeating-linear-gradient(180deg,#a8a8a8 0 1px,#fff 1px 2px)"></div>
<div class="a" style="left:393px;top:364px;width:1px;height:16px;background:repeating-linear-gradient(180deg,#a8a8a8 0 1px,#fff 1px 2px)"></div>
<div class="a" style="left:458px;top:364px;width:1px;height:16px;background:repeating-linear-gradient(180deg,#a8a8a8 0 1px,#fff 1px 2px)"></div>
<div class="a" style="left:531px;top:364px;width:1px;height:16px;background:repeating-linear-gradient(180deg,#a8a8a8 0 1px,#fff 1px 2px)"></div>
<div class="a" style="left:596px;top:364px;width:1px;height:16px;background:repeating-linear-gradient(180deg,#a8a8a8 0 1px,#fff 1px 2px)"></div>
<div class="a" style="left:645px;top:364px;width:1px;height:16px;background:repeating-linear-gradient(180deg,#a8a8a8 0 1px,#fff 1px 2px)"></div>
<div class="a" style="left:108px;top:380px;width:1px;height:16px;background:repeating-linear-gradient(180deg,#a8a8a8 0 1px,#f0f0f0 1px 2px)"></div>
<div class="a" style="left:181px;top:380px;width:1px;height:16px;background:repeating-linear-gradient(180deg,#a8a8a8 0 1px,#f0f0f0 1px 2px)"></div>
<div class="a" style="left:222px;top:380px;width:1px;height:16px;background:repeating-linear-gradient(180deg,#a8a8a8 0 1px,#f0f0f0 1px 2px)"></div>
<div class="a" style="left:279px;top:380px;width:1px;height:16px;background:repeating-linear-gradient(180deg,#a8a8a8 0 1px,#f0f0f0 1px 2px)"></div>
<div class="a" style="left:344px;top:380px;width:1px;height:16px;background:repeating-linear-gradient(180deg,#a8a8a8 0 1px,#f0f0f0 1px 2px)"></div>
<div class="a" style="left:393px;top:380px;width:1px;height:16px;background:repeating-linear-gradient(180deg,#a8a8a8 0 1px,#f0f0f0 1px 2px)"></div>
<div class="a" style="left:458px;top:380px;width:1px;height:16px;background:repeating-linear-gradient(180deg,#a8a8a8 0 1px,#f0f0f0 1px 2px)"></div>
<div class="a" style="left:531px;top:380px;width:1px;height:16px;background:repeating-linear-gradient(180deg,#a8a8a8 0 1px,#f0f0f0 1px 2px)"></div>
<div class="a" style="left:596px;top:380px;width:1px;height:16px;background:repeating-linear-gradient(180deg,#a8a8a8 0 1px,#f0f0f0 1px 2px)"></div>
<div class="a" style="left:645px;top:380px;width:1px;height:16px;background:repeating-linear-gradient(180deg,#a8a8a8 0 1px,#f0f0f0 1px 2px)"></div>
<div class="a" style="left:108px;top:396px;width:1px;height:16px;background:repeating-linear-gradient(180deg,#a8a8a8 0 1px,#fff 1px 2px)"></div>
<div class="a" style="left:181px;top:396px;width:1px;height:16px;background:repeating-linear-gradient(180deg,#a8a8a8 0 1px,#fff 1px 2px)"></div>
<div class="a" style="left:222px;top:396px;width:1px;height:16px;background:repeating-linear-gradient(180deg,#a8a8a8 0 1px,#fff 1px 2px)"></div>
<div class="a" style="left:279px;top:396px;width:1px;height:16px;background:repeating-linear-gradient(180deg,#a8a8a8 0 1px,#fff 1px 2px)"></div>
<div class="a" style="left:344px;top:396px;width:1px;height:16px;background:repeating-linear-gradient(180deg,#a8a8a8 0 1px,#fff 1px 2px)"></div>
<div class="a" style="left:393px;top:396px;width:1px;height:16px;background:repeating-linear-gradient(180deg,#a8a8a8 0 1px,#fff 1px 2px)"></div>
<div class="a" style="left:458px;top:396px;width:1px;height:16px;background:repeating-linear-gradient(180deg,#a8a8a8 0 1px,#fff 1px 2px)"></div>
<div class="a" style="left:531px;top:396px;width:1px;height:16px;background:repeating-linear-gradient(180deg,#a8a8a8 0 1px,#fff 1px 2px)"></div>
<div class="a" style="left:596px;top:396px;width:1px;height:16px;background:repeating-linear-gradient(180deg,#a8a8a8 0 1px,#fff 1px 2px)"></div>
<div class="a" style="left:645px;top:396px;width:1px;height:16px;background:repeating-linear-gradient(180deg,#a8a8a8 0 1px,#fff 1px 2px)"></div>
<div class="a" style="left:108px;top:412px;width:1px;height:16px;background:repeating-linear-gradient(180deg,#a8a8a8 0 1px,#f0f0f0 1px 2px)"></div>
<div class="a" style="left:181px;top:412px;width:1px;height:16px;background:repeating-linear-gradient(180deg,#a8a8a8 0 1px,#f0f0f0 1px 2px)"></div>
<div class="a" style="left:222px;top:412px;width:1px;height:16px;background:repeating-linear-gradient(180deg,#a8a8a8 0 1px,#f0f0f0 1px 2px)"></div>
<div class="a" style="left:279px;top:412px;width:1px;height:16px;background:repeating-linear-gradient(180deg,#a8a8a8 0 1px,#f0f0f0 1px 2px)"></div>
<div class="a" style="left:344px;top:412px;width:1px;height:16px;background:repeating-linear-gradient(180deg,#a8a8a8 0 1px,#f0f0f0 1px 2px)"></div>
<div class="a" style="left:393px;top:412px;width:1px;height:16px;background:repeating-linear-gradient(180deg,#a8a8a8 0 1px,#f0f0f0 1px 2px)"></div>
<div class="a" style="left:458px;top:412px;width:1px;height:16px;background:repeating-linear-gradient(180deg,#a8a8a8 0 1px,#f0f0f0 1px 2px)"></div>
<div class="a" style="left:531px;top:412px;width:1px;height:16px;background:repeating-linear-gradient(180deg,#a8a8a8 0 1px,#f0f0f0 1px 2px)"></div>
<div class="a" style="left:596px;top:412px;width:1px;height:16px;background:repeating-linear-gradient(180deg,#a8a8a8 0 1px,#f0f0f0 1px 2px)"></div>
<div class="a" style="left:645px;top:412px;width:1px;height:16px;background:repeating-linear-gradient(180deg,#a8a8a8 0 1px,#f0f0f0 1px 2px)"></div>
<div class="a" style="left:108px;top:428px;width:1px;height:16px;background:repeating-linear-gradient(180deg,#a8a8a8 0 1px,#fff 1px 2px)"></div>
<div class="a" style="left:181px;top:428px;width:1px;height:16px;background:repeating-linear-gradient(180deg,#a8a8a8 0 1px,#fff 1px 2px)"></div>
<div class="a" style="left:222px;top:428px;width:1px;height:16px;background:repeating-linear-gradient(180deg,#a8a8a8 0 1px,#fff 1px 2px)"></div>
<div class="a" style="left:279px;top:428px;width:1px;height:16px;background:repeating-linear-gradient(180deg,#a8a8a8 0 1px,#fff 1px 2px)"></div>
<div class="a" style="left:344px;top:428px;width:1px;height:16px;background:repeating-linear-gradient(180deg,#a8a8a8 0 1px,#fff 1px 2px)"></div>
<div class="a" style="left:393px;top:428px;width:1px;height:16px;background:repeating-linear-gradient(180deg,#a8a8a8 0 1px,#fff 1px 2px)"></div>
<div class="a" style="left:458px;top:428px;width:1px;height:16px;background:repeating-linear-gradient(180deg,#a8a8a8 0 1px,#fff 1px 2px)"></div>
<div class="a" style="left:531px;top:428px;width:1px;height:16px;background:repeating-linear-gradient(180deg,#a8a8a8 0 1px,#fff 1px 2px)"></div>
<div class="a" style="left:596px;top:428px;width:1px;height:16px;background:repeating-linear-gradient(180deg,#a8a8a8 0 1px,#fff 1px 2px)"></div>
<div class="a" style="left:645px;top:428px;width:1px;height:16px;background:repeating-linear-gradient(180deg,#a8a8a8 0 1px,#fff 1px 2px)"></div>
<div class="a" style="left:108px;top:444px;width:1px;height:16px;background:repeating-linear-gradient(180deg,#a8a8a8 0 1px,#f0f0f0 1px 2px)"></div>
<div class="a" style="left:181px;top:444px;width:1px;height:16px;background:repeating-linear-gradient(180deg,#a8a8a8 0 1px,#f0f0f0 1px 2px)"></div>
<div class="a" style="left:222px;top:444px;width:1px;height:16px;background:repeating-linear-gradient(180deg,#a8a8a8 0 1px,#f0f0f0 1px 2px)"></div>
<div class="a" style="left:279px;top:444px;width:1px;height:16px;background:repeating-linear-gradient(180deg,#a8a8a8 0 1px,#f0f0f0 1px 2px)"></div>
<div class="a" style="left:344px;top:444px;width:1px;height:16px;background:repeating-linear-gradient(180deg,#a8a8a8 0 1px,#f0f0f0 1px 2px)"></div>
<div class="a" style="left:393px;top:444px;width:1px;height:16px;background:repeating-linear-gradient(180deg,#a8a8a8 0 1px,#f0f0f0 1px 2px)"></div>
<div class="a" style="left:458px;top:444px;width:1px;height:16px;background:repeating-linear-gradient(180deg,#a8a8a8 0 1px,#f0f0f0 1px 2px)"></div>
<div class="a" style="left:531px;top:444px;width:1px;height:16px;background:repeating-linear-gradient(180deg,#a8a8a8 0 1px,#f0f0f0 1px 2px)"></div>
<div class="a" style="left:596px;top:444px;width:1px;height:16px;background:repeating-linear-gradient(180deg,#a8a8a8 0 1px,#f0f0f0 1px 2px)"></div>
<div class="a" style="left:645px;top:444px;width:1px;height:16px;background:repeating-linear-gradient(180deg,#a8a8a8 0 1px,#f0f0f0 1px 2px)"></div>
<div class="a" style="left:108px;top:460px;width:1px;height:16px;background:repeating-linear-gradient(180deg,#a8a8a8 0 1px,#fff 1px 2px)"></div>
<div class="a" style="left:181px;top:460px;width:1px;height:16px;background:repeating-linear-gradient(180deg,#a8a8a8 0 1px,#fff 1px 2px)"></div>
<div class="a" style="left:222px;top:460px;width:1px;height:16px;background:repeating-linear-gradient(180deg,#a8a8a8 0 1px,#fff 1px 2px)"></div>
<div class="a" style="left:279px;top:460px;width:1px;height:16px;background:repeating-linear-gradient(180deg,#a8a8a8 0 1px,#fff 1px 2px)"></div>
<div class="a" style="left:344px;top:460px;width:1px;height:16px;background:repeating-linear-gradient(180deg,#a8a8a8 0 1px,#fff 1px 2px)"></div>
<div class="a" style="left:393px;top:460px;width:1px;height:16px;background:repeating-linear-gradient(180deg,#a8a8a8 0 1px,#fff 1px 2px)"></div>
<div class="a" style="left:458px;top:460px;width:1px;height:16px;background:repeating-linear-gradient(180deg,#a8a8a8 0 1px,#fff 1px 2px)"></div>
<div class="a" style="left:531px;top:460px;width:1px;height:16px;background:repeating-linear-gradient(180deg,#a8a8a8 0 1px,#fff 1px 2px)"></div>
<div class="a" style="left:596px;top:460px;width:1px;height:16px;background:repeating-linear-gradient(180deg,#a8a8a8 0 1px,#fff 1px 2px)"></div>
<div class="a" style="left:645px;top:460px;width:1px;height:16px;background:repeating-linear-gradient(180deg,#a8a8a8 0 1px,#fff 1px 2px)"></div>
<div class="a" style="left:108px;top:476px;width:1px;height:16px;background:repeating-linear-gradient(180deg,#a8a8a8 0 1px,#f0f0f0 1px 2px)"></div>
<div class="a" style="left:181px;top:476px;width:1px;height:16px;background:repeating-linear-gradient(180deg,#a8a8a8 0 1px,#f0f0f0 1px 2px)"></div>
<div class="a" style="left:222px;top:476px;width:1px;height:16px;background:repeating-linear-gradient(180deg,#a8a8a8 0 1px,#f0f0f0 1px 2px)"></div>
<div class="a" style="left:279px;top:476px;width:1px;height:16px;background:repeating-linear-gradient(180deg,#a8a8a8 0 1px,#f0f0f0 1px 2px)"></div>
<div class="a" style="left:344px;top:476px;width:1px;height:16px;background:repeating-linear-gradient(180deg,#a8a8a8 0 1px,#f0f0f0 1px 2px)"></div>
<div class="a" style="left:393px;top:476px;width:1px;height:16px;background:repeating-linear-gradient(180deg,#a8a8a8 0 1px,#f0f0f0 1px 2px)"></div>
<div class="a" style="left:458px;top:476px;width:1px;height:16px;background:repeating-linear-gradient(180deg,#a8a8a8 0 1px,#f0f0f0 1px 2px)"></div>
<div class="a" style="left:531px;top:476px;width:1px;height:16px;background:repeating-linear-gradient(180deg,#a8a8a8 0 1px,#f0f0f0 1px 2px)"></div>
<div class="a" style="left:596px;top:476px;width:1px;height:16px;background:repeating-linear-gradient(180deg,#a8a8a8 0 1px,#f0f0f0 1px 2px)"></div>
<div class="a" style="left:645px;top:476px;width:1px;height:16px;background:repeating-linear-gradient(180deg,#a8a8a8 0 1px,#f0f0f0 1px 2px)"></div>
<div class="a" style="left:36px;top:44px;width:74px;height:17px;border-left:1px solid #000;border-top:1px solid #000;border-right:3px solid #000;border-bottom:3px solid #000"></div>
<div class="a" style="left:37px;top:45px;width:70px;height:13px;background:#fff"></div>
<div class="t" style="left:38px;top:44px">RF12923005</div>
<div class="a" style="left:36px;top:59px;width:72px;height:1px;background:repeating-linear-gradient(90deg,transparent 0 1px,#777 1px 2px)"></div>
<div class="a" style="left:108px;top:44px;width:1px;height:16px;background:repeating-linear-gradient(180deg,#777 0 1px,transparent 1px 2px)"></div>
<div class="a" style="left:36px;top:491px;width:631px;height:1px;background:#a0a0a0"></div>
<div class="a" style="left:240px;top:211px;width:252px;height:335px;background:#f1f1f1;border:1px solid #cacaca"></div>
<div class="a" style="left:241px;top:212px;width:250px;height:333px;border-left:1px solid #f4f4f4;border-top:1px solid #f4f4f4"></div>
<div class="mi d" style="top:214px"><u>C</u>réation (F9)</div>
<div class="mi d" style="top:236px"><u>M</u>odification (F1)</div>
<div class="mi d" style="top:258px"><u>M</u>odification Globale (Maj+F1)</div>
<div class="mi d" style="top:280px"><u>D</u>uplication (F7)</div>
<div class="mi d" style="top:302px"><u>S</u>uppression (F6)</div>
<div class="mi" style="top:324px"><u>D</u>étail (F8)</div>
<div class="a" style="left:271px;top:349px;width:218px;height:1px;background:#d0d0d0"></div>
<div class="a" style="left:243px;top:353px;width:246px;height:22px;background:#91c9f7"></div>
<div class="mi" style="top:353px"><u>D</u>étail Rapprochement</div>
<div class="mi" style="top:375px"><u>G</u>énération Automatique</div>
<div class="a" style="left:271px;top:400px;width:218px;height:1px;background:#d0d0d0"></div>
<div class="mi d" style="top:404px"><u>V</u>alidation Relevé</div>
<div class="mi d" style="top:426px"><u>V</u>alidation avec Edition</div>
<div class="mi" style="top:448px"><u>A</u>nnulation Validation Relevé</div>
<div class="mi" style="top:470px"><u>E</u>dition Relevé</div>
<div class="a" style="left:271px;top:495px;width:218px;height:1px;background:#d0d0d0"></div>
<div class="mi" style="top:499px"><u>D</u>éfinition Filtres et Tris</div>
<div class="mi" style="top:521px"><u>C</u>ondition par Défaut</div>
<svg class="a" style="left:470px;top:358px;filter:drop-shadow(1px 1px 1px rgba(0,0,0,0.35))" width="18" height="24" viewBox="0 0 18 24">
<path d="M1.5,1.5 L1.5,18 L5,14.5 L7.8,20 L10.5,19 L7.8,13.5 L12.5,13.5 Z" fill="#fff" stroke="#000" stroke-width="1" stroke-linejoin="round"/></svg>
</body></html>
